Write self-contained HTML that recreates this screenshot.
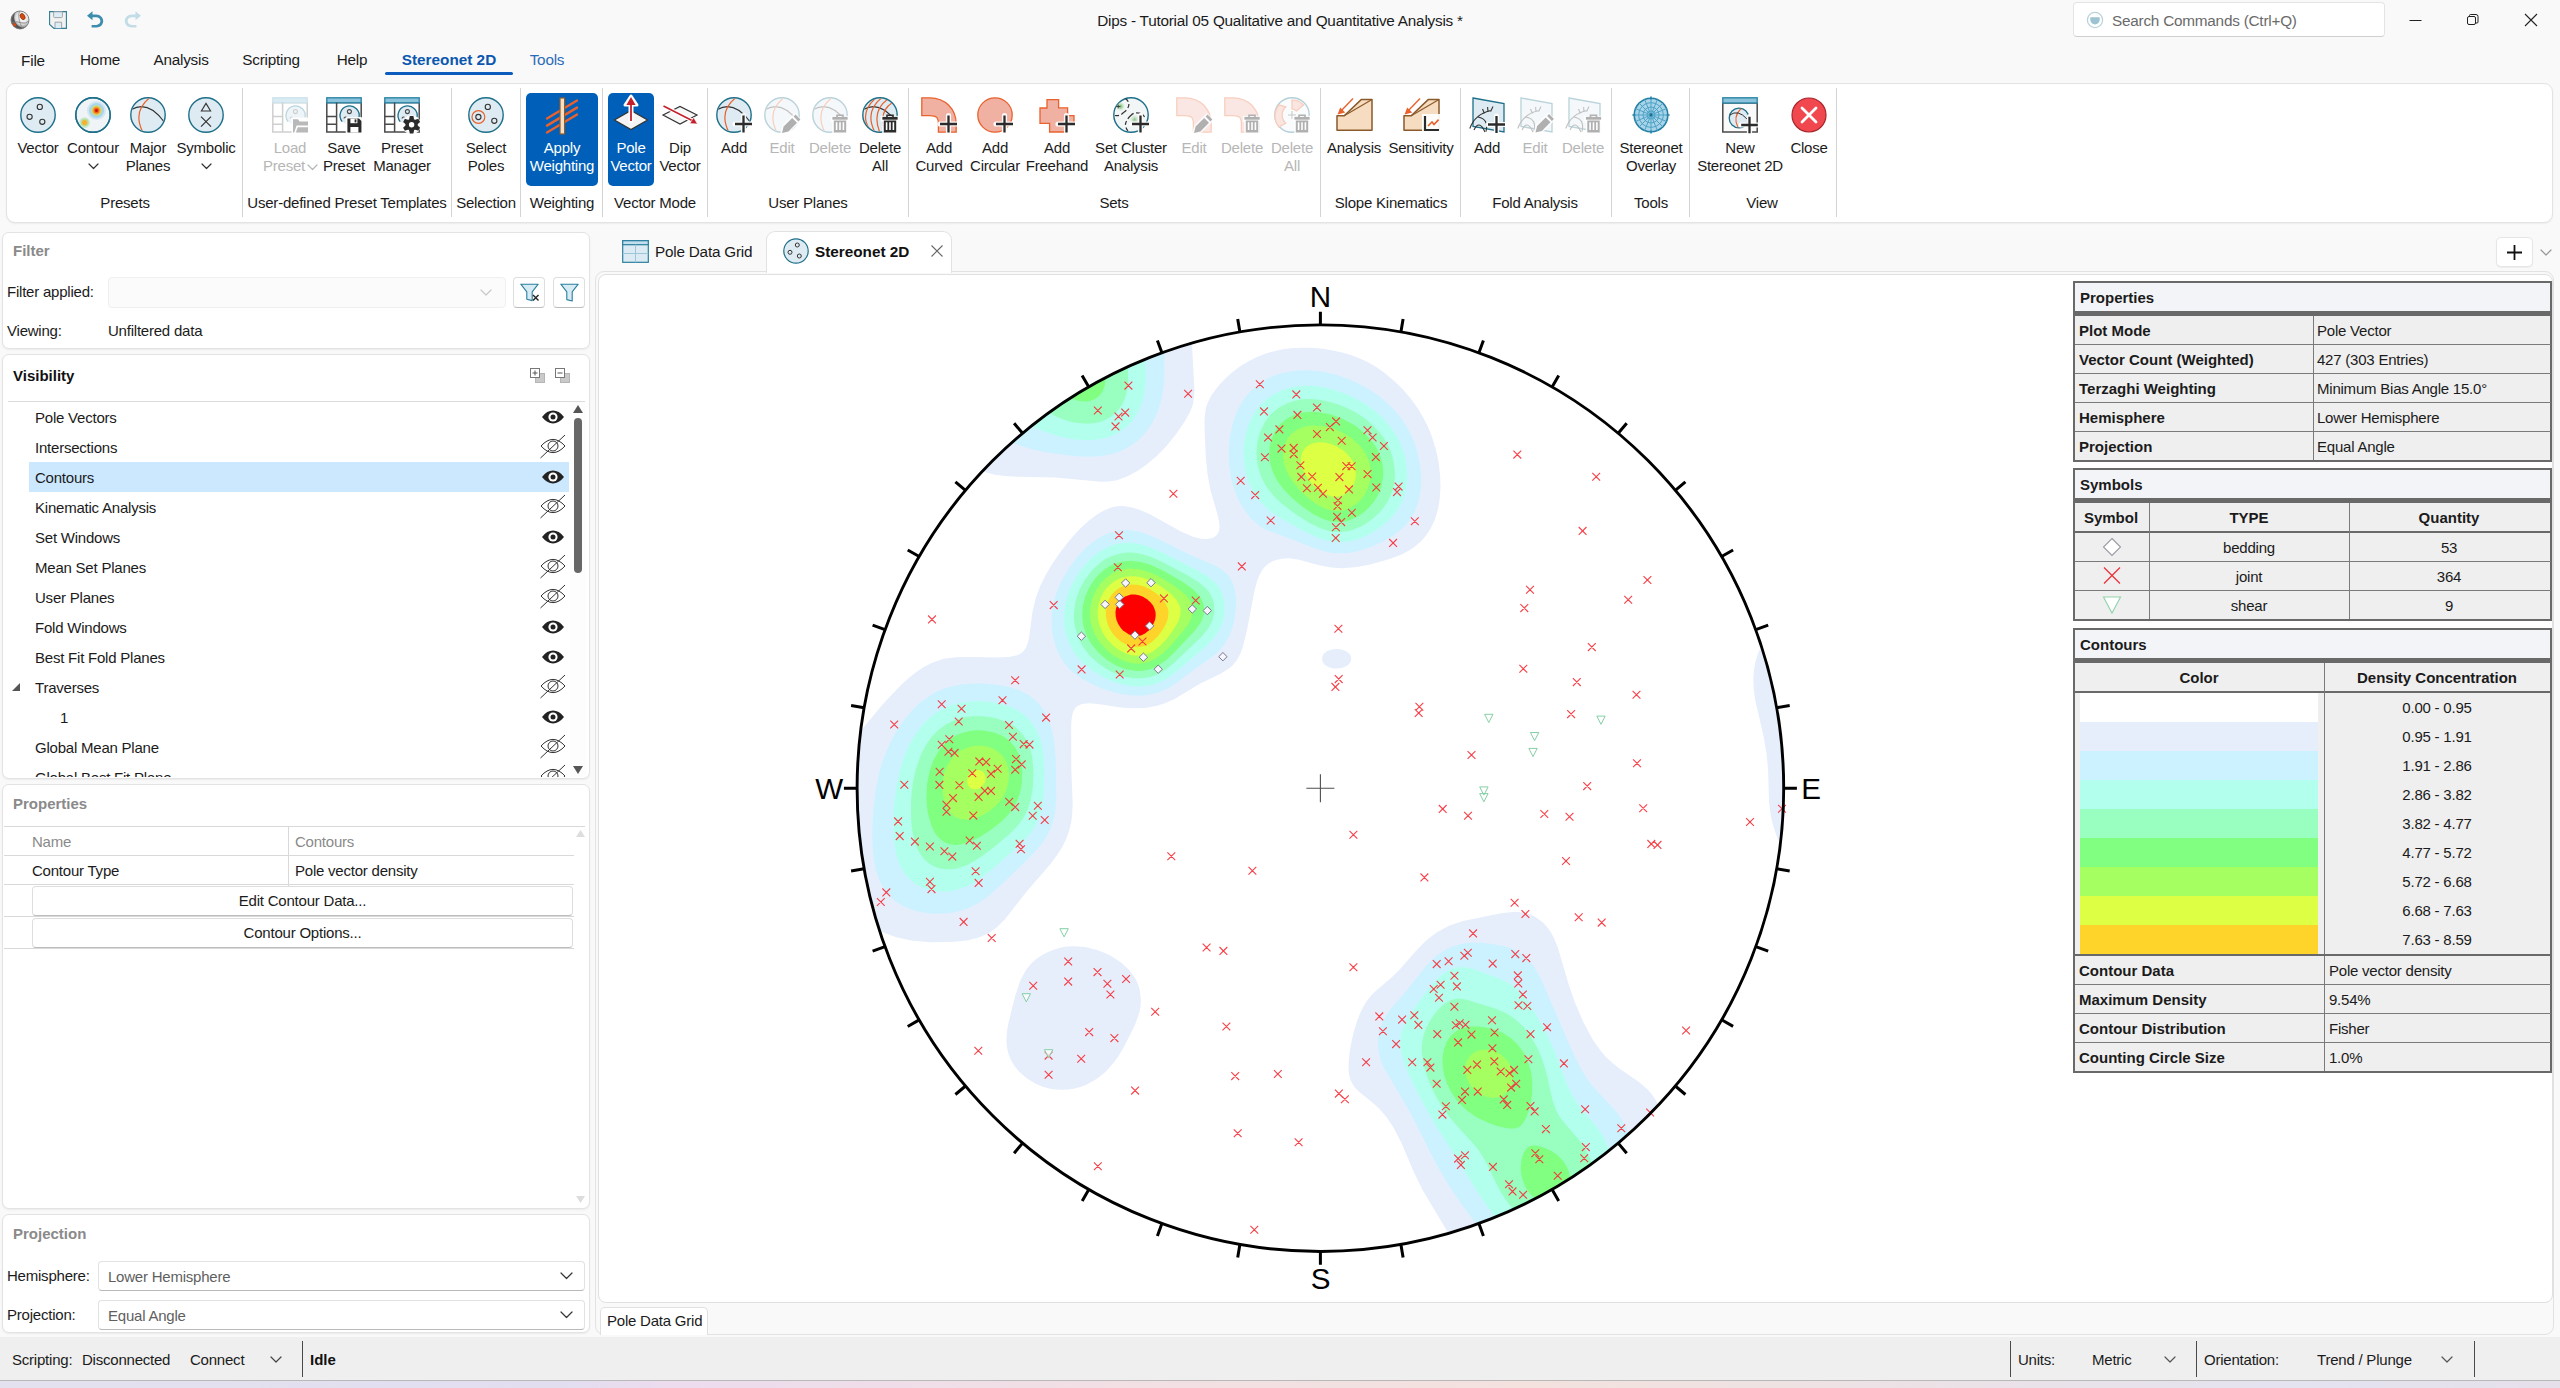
<!DOCTYPE html>
<html lang="en"><head><meta charset="utf-8"><title>Dips - Tutorial 05 Qualitative and Quantitative Analysis</title>
<style>
*{box-sizing:border-box;margin:0;padding:0}
html,body{width:2560px;height:1388px;overflow:hidden}
body{position:relative;background:#f9f9f9;font-family:"Liberation Sans",sans-serif;font-size:15px;color:#1b1b1b;line-height:18px;letter-spacing:-.22px}
.a{position:absolute}
.t{position:absolute;white-space:nowrap;line-height:18px;margin-top:1px}
.c{transform:translateX(-50%);text-align:center}
.b{font-weight:bold;letter-spacing:0}
.g{color:#8a8a8a}
.dis{color:#b4b4b4}
svg{position:absolute;overflow:visible}
.panel{position:absolute;background:#fff;border:1px solid #e3e3e3;border-radius:7px;box-shadow:0 1px 2px rgba(0,0,0,.06)}
.sep{position:absolute;width:1px;background:#d4d4d4;top:88px;height:129px}
.rl{position:absolute;white-space:nowrap;transform:translateX(-50%);text-align:center;line-height:18px;top:139px;margin-top:.4px}
.gl{position:absolute;white-space:nowrap;transform:translateX(-50%);top:194px;line-height:18px;margin-top:.4px}
.sel{position:absolute;background:#005fb8;border-radius:5px}
.combo{position:absolute;background:#fff;border:1px solid #e2e2e2;border-bottom-color:#b9b9b9;border-radius:4px}
.btn{position:absolute;background:#fff;border:1px solid #dedede;border-bottom-color:#bdbdbd;border-radius:4px;text-align:center}
.row{position:absolute;left:35px;white-space:nowrap;line-height:18px}
.lg{position:absolute;background:#efefef;border:2px solid #696969}
.lgh{position:absolute;background:#f3f4f7;border:2px solid #696969;border-bottom-width:4px}
.lc{position:absolute;border-right:1px solid #7a7a7a;border-bottom:1px solid #7a7a7a}
.lt{position:absolute;white-space:nowrap;line-height:18px;margin-top:1px;font-size:15px;color:#1b1b1b}
</style></head><body>
<svg class="a" style="left:10px;top:10px" width="20" height="20" viewBox="0 0 20 20">
<defs><radialGradient id="gA" cx="62%" cy="38%" r="70%"><stop offset="0" stop-color="#fff"/><stop offset=".5" stop-color="#e2e2e2"/><stop offset=".78" stop-color="#8a8a8a"/><stop offset="1" stop-color="#3c3c3c"/></radialGradient></defs>
<circle cx="10" cy="10" r="9" fill="url(#gA)" stroke="#6b6b6b" stroke-width=".8"/><path d="M5.2 2.6A9 9 0 0 0 14.5 17.8A10.5 10.5 0 0 1 5.2 2.6Z" fill="#4a4a4a" opacity=".85"/>
<path d="M1.5 12.5 Q8 11 12 13 Q16 14 18.5 11" fill="none" stroke="#777" stroke-width=".8"/>
<path d="M9.5 1.2 Q7 8 12.5 18.5" fill="none" stroke="#888" stroke-width=".8"/>
<ellipse cx="12.6" cy="6.6" rx="2.2" ry="3.3" transform="rotate(-28 12.6 6.6)" fill="#d9480f" stroke="#7a2a08" stroke-width=".6"/>
<ellipse cx="4.6" cy="14.6" rx="1.8" ry="1.3" transform="rotate(35 4.6 14.6)" fill="#d9480f"/>
</svg>
<svg class="a" style="left:49px;top:11px" width="18" height="18" viewBox="0 0 18 18">
<path d="M.6 .6H17.4V17.4H5L.6 13.4Z" fill="#f2f2f2" stroke="#2e7d95" stroke-width="1.1"/>
<path d="M4.6 .8V5.6Q4.6 6.6 5.6 6.6H12.4Q13.4 6.6 13.4 5.6V.8Z" fill="#dcedf7" stroke="#9c9c9c" stroke-width=".9"/>
<path d="M6 17.2V11.2H12.6V17.2" fill="#dcedf7" stroke="#9c9c9c" stroke-width=".9"/>
</svg>
<svg class="a" style="left:86px;top:10px" width="20" height="20" viewBox="0 0 20 20">
<path d="M6.5 1.2L1 5.7L6.5 10.2V7.2H10.2C12.6 7.2 14.4 8.9 14.4 11.1C14.4 13.3 12.6 15 10.2 15H5.6V17.6H10.4C14.2 17.6 17.2 14.8 17.2 11.1C17.2 7.4 14.2 4.4 10.4 4.4H6.5Z" fill="#3d8dad"/>
</svg>
<svg class="a" style="left:121.5px;top:9.5px" width="20" height="20" viewBox="0 0 20 20">
<path d="M13.5 1.2L19 5.7L13.5 10.2V7.2H9.8C7.4 7.2 5.6 8.9 5.6 11.1C5.6 13.3 7.4 15 9.8 15H14.4V17.6H9.6C5.8 17.6 2.8 14.8 2.8 11.1C2.8 7.4 5.8 4.4 9.6 4.4H13.5Z" fill="#c3dde7"/>
</svg>
<div class="t c" style="left:1280px;top:11px;font-size:15.3px">Dips - Tutorial 05 Qualitative and Quantitative Analysis *</div>
<div class="a" style="left:2073px;top:2px;width:312px;height:35px;background:#fff;border:1px solid #e4e4e4;border-bottom-color:#cfcfcf;border-radius:4px"></div>
<svg class="a" style="left:2086px;top:11px" width="18" height="18" viewBox="0 0 18 18">
<circle cx="9" cy="9" r="7.6" fill="#fff" stroke="#b9d3dd" stroke-width="1.3"/>
<path d="M4.3 6.2H13.7V8.6C13.7 11.4 11.6 13.4 9 13.4C6.4 13.4 4.3 11.4 4.3 8.6Z" fill="#9cc3d1"/>
</svg>
<div class="t" style="left:2112px;top:11px;font-size:15.3px;color:#6a6a6a">Search Commands (Ctrl+Q)</div>
<svg class="a" style="left:2400px;top:0" width="160" height="40" viewBox="0 0 160 40">
<path d="M9.5 20.5H21.5" stroke="#222" stroke-width="1"/>
<rect x="67.5" y="16.5" width="8" height="8" rx="1.5" fill="none" stroke="#222" stroke-width="1"/>
<path d="M69.5 16.5V15.5Q69.5 14.5 70.5 14.5H76Q78 14.5 78 16.5V22Q78 23 77 23H75.5" fill="none" stroke="#222" stroke-width="1"/>
<path d="M125 14L137 26M137 14L125 26" stroke="#222" stroke-width="1.1"/>
</svg>
<div class="t c" style="left:33px;top:51px;font-size:15.3px">File</div>
<div class="t c" style="left:100px;top:50px;font-size:15.3px">Home</div>
<div class="t c" style="left:181px;top:50px;font-size:15.3px">Analysis</div>
<div class="t c" style="left:271px;top:50px;font-size:15.3px">Scripting</div>
<div class="t c" style="left:352px;top:50px;font-size:15.3px">Help</div>
<div class="t c b" style="left:449px;top:50px;font-size:15.3px;color:#0b57b0">Stereonet 2D</div>
<div class="t c" style="left:547px;top:50px;font-size:15.3px;color:#2b6cb8">Tools</div>
<div class="a" style="left:385px;top:72px;width:128px;height:3px;border-radius:2px;background:#0b5cbd"></div>
<div class="panel" style="left:6px;top:83px;width:2547px;height:140px;border-radius:9px"></div>
<div class="sel" style="left:526px;top:93px;width:72px;height:93px"></div>
<div class="sel" style="left:608px;top:93px;width:46px;height:93px"></div>
<svg class="a" style="left:20px;top:97px" width="36" height="36" viewBox="0 0 36 36"><circle cx="18" cy="18" r="17.2" fill="#deebf2" stroke="#1d6f8a" stroke-width="1.4" opacity="1"/><circle cx="19.8" cy="9.9" r="2.6" fill="none" stroke="#333" stroke-width="1.1"/><circle cx="9.6" cy="19.8" r="2.6" fill="none" stroke="#333" stroke-width="1.1"/><circle cx="22.3" cy="24.8" r="2.6" fill="none" stroke="#333" stroke-width="1.1"/></svg>
<div class="rl" style="left:38px;">Vector</div>
<svg class="a" style="left:75px;top:97px" width="36" height="36" viewBox="0 0 36 36"><defs><clipPath id="cc"><circle cx="18" cy="18" r="16.6"/></clipPath></defs><circle cx="18" cy="18" r="17.2" fill="#f1f4f6" stroke="#1d6f8a" stroke-width="1.4" opacity="1"/><g clip-path="url(#cc)"><circle cx="21.5" cy="13.5" r="9.6" fill="#d3e6f4"/><circle cx="21.5" cy="13.5" r="7.6" fill="#a9d4ec"/><circle cx="21.5" cy="13.5" r="5.8" fill="#b7e0a8"/><circle cx="21.5" cy="13.5" r="4.3" fill="#f7b731"/><circle cx="21.5" cy="13.5" r="2.9" fill="#ef6a1f"/><circle cx="21.5" cy="13.5" r="1.5" fill="#c81414"/><circle cx="9.6" cy="25.6" r="5.4" fill="#cfe8d2"/><circle cx="9.6" cy="25.6" r="4" fill="#b5e0a0"/><circle cx="9.6" cy="25.6" r="2.6" fill="#f9b12d"/></g><circle cx="18" cy="18" r="17.2" fill="none" stroke="#1d6f8a" stroke-width="1.4"/></svg>
<div class="rl" style="left:93px;">Contour</div>
<svg class="a" style="left:130px;top:97px" width="36" height="36" viewBox="0 0 36 36"><g opacity="1"><circle cx="18" cy="18" r="17.2" fill="#deebf2" stroke="#1d6f8a" stroke-width="1.4" opacity="1"/><defs><clipPath id="cp2"><circle cx="18" cy="18" r="16.5"/></clipPath></defs><g clip-path="url(#cp2)"><path d="M1.5 12.5Q18 3 33.8 24.5" fill="none" stroke="#333" stroke-width="1.1"/><path d="M20 .5Q2.5 14 12.5 34.5" fill="none" stroke="#e9622d" stroke-width="1.2"/></g></g></svg>
<div class="rl" style="left:148px;">Major<br>Planes</div>
<svg class="a" style="left:188px;top:97px" width="36" height="36" viewBox="0 0 36 36"><circle cx="18" cy="18" r="17.2" fill="#deebf2" stroke="#1d6f8a" stroke-width="1.4" opacity="1"/><path d="M18 6.4L22.6 14H13.4Z" fill="none" stroke="#333" stroke-width="1.1"/><path d="M13 19.6L23 29.6M23 19.6L13 29.6" stroke="#333" stroke-width="1.2"/></svg>
<div class="rl" style="left:206px;">Symbolic</div>
<svg class="a" style="left:272px;top:97px" width="36" height="36" viewBox="0 0 36 36"><rect x=".8" y="5.6" width="34.4" height="29.4" fill="#fff" stroke="#cfcfcf" stroke-width="1.5"/><rect x=".8" y=".8" width="34.4" height="5" fill="#d9ebf3" stroke="#cfe3ec" stroke-width="1.4"/><path d="M10.6 5.6V35M.8 19.6H10.6M.8 27.2H10.6" stroke="#cfcfcf" stroke-width="1.5" fill="none"/><circle cx="23.6" cy="18.4" r="9.4" fill="#eef5f8"/><path d="M16.2 24.6A9.6 9.6 0 1 1 33 20.6" fill="none" stroke="#bcd6df" stroke-width="1.3"/><circle cx="23.4" cy="14.6" r="2" fill="none" stroke="#cfcfcf" stroke-width="1.1"/><path d="M18 21.5a1.6 1.6 0 0 1 2.4 -1.2" fill="none" stroke="#cfcfcf" stroke-width="1.1"/><path d="M19.5 20.5H36.5V36.5H19.5Z" fill="#fff" opacity=".9"/><path d="M21 22.2H26L27.6 24.4H36V28.6H24.6L22.2 35.6H21Z" fill="#b9b9b9"/><path d="M25.8 30.2H36V35.6H23.8Z" fill="#b9b9b9"/></svg>
<div class="rl" style="left:290px;color:#b6b6b6">Load<br><span style="margin-right:12px">Preset</span></div>
<svg class="a" style="left:326px;top:97px" width="36" height="36" viewBox="0 0 36 36"><rect x=".8" y="5.6" width="34.4" height="29.4" fill="#fff" stroke="#4a4a4a" stroke-width="1.5"/><rect x=".8" y=".8" width="34.4" height="5" fill="#8cc3dc" stroke="#2e86a6" stroke-width="1.4"/><path d="M10.6 5.6V35M.8 19.6H10.6M.8 27.2H10.6" stroke="#4a4a4a" stroke-width="1.5" fill="none"/><circle cx="23.6" cy="18.4" r="9.4" fill="#deebf2"/><path d="M16.2 24.6A9.6 9.6 0 1 1 33 20.6" fill="none" stroke="#1d6f8a" stroke-width="1.3"/><circle cx="23.4" cy="14.6" r="2" fill="none" stroke="#4a4a4a" stroke-width="1.1"/><path d="M18 21.5a1.6 1.6 0 0 1 2.4 -1.2" fill="none" stroke="#4a4a4a" stroke-width="1.1"/><rect x="19.6" y="20" width="17" height="17" rx="2" fill="#fff" opacity=".95"/><path d="M21.4 21.6H33L35.4 24V35.6H21.4Z" fill="#2b2b2b"/><rect x="24.4" y="21.6" width="7" height="4.6" fill="#fff"/><rect x="28.6" y="22.4" width="1.8" height="3" fill="#2b2b2b"/><rect x="24.4" y="30" width="8" height="5.6" fill="#fff"/></svg>
<div class="rl" style="left:344px;">Save<br>Preset</div>
<svg class="a" style="left:384px;top:97px" width="36" height="36" viewBox="0 0 36 36"><rect x=".8" y="5.6" width="34.4" height="29.4" fill="#fff" stroke="#4a4a4a" stroke-width="1.5"/><rect x=".8" y=".8" width="34.4" height="5" fill="#8cc3dc" stroke="#2e86a6" stroke-width="1.4"/><path d="M10.6 5.6V35M.8 19.6H10.6M.8 27.2H10.6" stroke="#4a4a4a" stroke-width="1.5" fill="none"/><circle cx="23.6" cy="18.4" r="9.4" fill="#deebf2"/><path d="M16.2 24.6A9.6 9.6 0 1 1 33 20.6" fill="none" stroke="#1d6f8a" stroke-width="1.3"/><circle cx="23.4" cy="14.6" r="2" fill="none" stroke="#4a4a4a" stroke-width="1.1"/><path d="M18 21.5a1.6 1.6 0 0 1 2.4 -1.2" fill="none" stroke="#4a4a4a" stroke-width="1.1"/><circle cx="27.6" cy="27.8" r="9.6" fill="#fff" opacity=".95"/><path d="M25.0 22.8L25.8 19.0H29.400000000000002L30.200000000000003 22.8Z" fill="#2b2b2b" transform="rotate(0 27.6 27.8)"/><path d="M25.0 22.8L25.8 19.0H29.400000000000002L30.200000000000003 22.8Z" fill="#2b2b2b" transform="rotate(60 27.6 27.8)"/><path d="M25.0 22.8L25.8 19.0H29.400000000000002L30.200000000000003 22.8Z" fill="#2b2b2b" transform="rotate(120 27.6 27.8)"/><path d="M25.0 22.8L25.8 19.0H29.400000000000002L30.200000000000003 22.8Z" fill="#2b2b2b" transform="rotate(180 27.6 27.8)"/><path d="M25.0 22.8L25.8 19.0H29.400000000000002L30.200000000000003 22.8Z" fill="#2b2b2b" transform="rotate(240 27.6 27.8)"/><path d="M25.0 22.8L25.8 19.0H29.400000000000002L30.200000000000003 22.8Z" fill="#2b2b2b" transform="rotate(300 27.6 27.8)"/><circle cx="27.6" cy="27.8" r="6.1" fill="#2b2b2b"/><circle cx="27.6" cy="27.8" r="2.7" fill="#fff"/></svg>
<div class="rl" style="left:402px;">Preset<br>Manager</div>
<svg class="a" style="left:468px;top:97px" width="36" height="36" viewBox="0 0 36 36"><circle cx="18" cy="18" r="17.2" fill="#deebf2" stroke="#1d6f8a" stroke-width="1.4" opacity="1"/><circle cx="10.4" cy="20" r="6.4" fill="none" stroke="#e9622d" stroke-width="1.2"/><circle cx="19.8" cy="9.9" r="2.6" fill="none" stroke="#333" stroke-width="1.1"/><circle cx="10.4" cy="20" r="2.6" fill="none" stroke="#333" stroke-width="1.1"/><circle cx="26.3" cy="23.8" r="2.6" fill="none" stroke="#333" stroke-width="1.1"/></svg>
<div class="rl" style="left:486px;">Select<br>Poles</div>
<svg class="a" style="left:544px;top:97px" width="36" height="36" viewBox="0 0 36 36"><path d="M3 21.5L33 3.5M3 28.6L33 10.6M3 35.5L33 17.5" stroke="#e9622d" stroke-width="2.4" stroke-linecap="round"/><rect x="16" y="1" width="4.6" height="36" fill="#f8dfc0" stroke="#8b5a2b" stroke-width="1.2"/></svg>
<div class="rl" style="left:562px;color:#fff">Apply<br>Weighting</div>
<svg class="a" style="left:613px;top:97px" width="36" height="36" viewBox="0 0 36 36"><path d="M18 13.4L34.6 23L18 32.6L1.4 23Z" fill="#f4f4f4" stroke="#333" stroke-width="1.2"/><path d="M18 24V4" stroke="#fff" stroke-width="5" stroke-linecap="round"/><path d="M18 -1L24 8H12Z" fill="#fff" stroke="#fff" stroke-width="3" stroke-linejoin="round"/><path d="M18 24V7" stroke="#c41f2c" stroke-width="1.8"/><path d="M18 0L22.6 8H13.4Z" fill="#c41f2c"/></svg>
<div class="rl" style="left:631px;color:#fff">Pole<br>Vector</div>
<svg class="a" style="left:662px;top:97px" width="36" height="36" viewBox="0 0 36 36"><path d="M1 18L18 9.5L35 18L18 27Z" fill="#f7f7f7" stroke="#333" stroke-width="1.2"/><path d="M1.5 9L31 24" stroke="#fff" stroke-width="4"/><path d="M1.5 9L31 24" stroke="#c41f2c" stroke-width="1.5"/><path d="M35.5 27L27.8 26.6L31.6 20.4Z" fill="#c41f2c" stroke="#fff" stroke-width=".6"/></svg>
<div class="rl" style="left:680px;">Dip<br>Vector</div>
<svg class="a" style="left:716px;top:97px" width="36" height="36" viewBox="0 0 36 36"><g opacity="1"><circle cx="18" cy="18" r="17.2" fill="#deebf2" stroke="#1d6f8a" stroke-width="1.4" opacity="1"/><defs><clipPath id="cp2"><circle cx="18" cy="18" r="16.5"/></clipPath></defs><g clip-path="url(#cp2)"><path d="M1.5 12.5Q18 3 33.8 24.5" fill="none" stroke="#333" stroke-width="1.1"/><path d="M20 .5Q2.5 14 12.5 34.5" fill="none" stroke="#e9622d" stroke-width="1.2"/></g></g><path d="M19.0 27H36.0M27.5 18.5V35.5" stroke="#fff" stroke-width="5.2" stroke-linecap="round" opacity=".92"/><path d="M19.0 27H36.0M27.5 18.5V35.5" stroke="#2b2b2b" stroke-width="2.3"/></svg>
<div class="rl" style="left:734px;">Add</div>
<svg class="a" style="left:764px;top:97px" width="36" height="36" viewBox="0 0 36 36"><g opacity="0.3"><circle cx="18" cy="18" r="17.2" fill="#deebf2" stroke="#1d6f8a" stroke-width="1.4" opacity="1"/><defs><clipPath id="cp2"><circle cx="18" cy="18" r="16.5"/></clipPath></defs><g clip-path="url(#cp2)"><path d="M1.5 12.5Q18 3 33.8 24.5" fill="none" stroke="#333" stroke-width="1.1"/><path d="M20 .5Q2.5 14 12.5 34.5" fill="none" stroke="#e9622d" stroke-width="1.2"/></g></g><path d="M18 36L19.6 29.6L31 18.2L35.8 23L24.4 34.4Z" fill="#fff" stroke="#fff" stroke-width="3.2" opacity=".9"/><path d="M18 36L19.6 29.6L28.2 21L33 25.8L24.4 34.4Z" fill="#b0b0b0"/><path d="M29.6 19.6L31.6 17.6L36.4 22.4L34.4 24.4Z" fill="#b0b0b0"/></svg>
<div class="rl" style="left:782px;color:#b6b6b6">Edit</div>
<svg class="a" style="left:812px;top:97px" width="36" height="36" viewBox="0 0 36 36"><g opacity="0.3"><circle cx="18" cy="18" r="17.2" fill="#deebf2" stroke="#1d6f8a" stroke-width="1.4" opacity="1"/><defs><clipPath id="cp2"><circle cx="18" cy="18" r="16.5"/></clipPath></defs><g clip-path="url(#cp2)"><path d="M1.5 12.5Q18 3 33.8 24.5" fill="none" stroke="#333" stroke-width="1.1"/><path d="M20 .5Q2.5 14 12.5 34.5" fill="none" stroke="#e9622d" stroke-width="1.2"/></g></g><path d="M20.2 20.3H35.8V23.3H20.2Z" fill="#fff" stroke="#fff" stroke-width="3" opacity=".9"/><path d="M21.7 23.0H34.3V35.7H21.7Z" fill="#fff" stroke="#fff" stroke-width="3" opacity=".9"/><path d="M25 20.1V18.3H31V20.1" fill="none" stroke="#b0b0b0" stroke-width="1.6"/><rect x="20.4" y="19.9" width="15.2" height="2.8" fill="#b0b0b0"/><path d="M21.8 23.5H34.2V35.5H21.8Z" fill="#b0b0b0"/><path d="M24.6 25.3V33.1M28 25.3V33.1M31.4 25.3V33.1" stroke="#fff" stroke-width="1.6"/></svg>
<div class="rl" style="left:830px;color:#b6b6b6">Delete</div>
<svg class="a" style="left:862px;top:97px" width="36" height="36" viewBox="0 0 36 36"><g opacity="1"><circle cx="18" cy="18" r="17.2" fill="#deebf2" stroke="#1d6f8a" stroke-width="1.4" opacity="1"/><defs><clipPath id="cp2"><circle cx="18" cy="18" r="16.5"/></clipPath></defs><g clip-path="url(#cp2)"><path d="M1.5 12.5Q18 3 33.8 24.5" fill="none" stroke="#333" stroke-width="1.1"/><path d="M20 .5Q2.5 14 12.5 34.5" fill="none" stroke="#e9622d" stroke-width="1.2"/><path d="M26 2Q9 14 18 36" fill="none" stroke="#e9622d" stroke-width="1.2"/><path d="M30.5 5.5Q15.5 15 23.5 36" fill="none" stroke="#e9622d" stroke-width="1.2"/><path d="M14 .8Q-3 16 7.5 32" fill="none" stroke="#e9622d" stroke-width="1.2"/></g></g><path d="M20.2 20.3H35.8V23.3H20.2Z" fill="#fff" stroke="#fff" stroke-width="3" opacity=".9"/><path d="M21.7 23.0H34.3V35.7H21.7Z" fill="#fff" stroke="#fff" stroke-width="3" opacity=".9"/><path d="M25 20.1V18.3H31V20.1" fill="none" stroke="#2b2b2b" stroke-width="1.6"/><rect x="20.4" y="19.9" width="15.2" height="2.8" fill="#2b2b2b"/><path d="M21.8 23.5H34.2V35.5H21.8Z" fill="#2b2b2b"/><path d="M24.6 25.3V33.1M28 25.3V33.1M31.4 25.3V33.1" stroke="#fff" stroke-width="1.6"/></svg>
<div class="rl" style="left:880px;">Delete<br>All</div>
<svg class="a" style="left:921px;top:97px" width="36" height="36" viewBox="0 0 36 36"><g opacity="1"><path d="M.8 .8H9C24 .8 35.2 12 35.2 27V35.2H17.4V27C17.4 20.5 15.5 18.6 9 18.6H.8Z" fill="#f0b0a2" stroke="#e9622d" stroke-width="1.3"/></g><path d="M19.0 27H36.0M27.5 18.5V35.5" stroke="#fff" stroke-width="5.2" stroke-linecap="round" opacity=".92"/><path d="M19.0 27H36.0M27.5 18.5V35.5" stroke="#2b2b2b" stroke-width="2.3"/></svg>
<div class="rl" style="left:939px;">Add<br>Curved</div>
<svg class="a" style="left:977px;top:97px" width="36" height="36" viewBox="0 0 36 36"><circle cx="18" cy="18" r="17.2" fill="#f0b0a2" stroke="#e9622d" stroke-width="1.3"/><path d="M19.0 27H36.0M27.5 18.5V35.5" stroke="#fff" stroke-width="5.2" stroke-linecap="round" opacity=".92"/><path d="M19.0 27H36.0M27.5 18.5V35.5" stroke="#2b2b2b" stroke-width="2.3"/></svg>
<div class="rl" style="left:995px;">Add<br>Circular</div>
<svg class="a" style="left:1039px;top:97px" width="36" height="36" viewBox="0 0 36 36"><path d="M8 2.6H19.6V10.8H28.6V18.6H35V26H28V35H10.6V26.4H1V11H8Z" fill="#f0b0a2" stroke="#e9622d" stroke-width="1.3"/><path d="M19.0 27H36.0M27.5 18.5V35.5" stroke="#fff" stroke-width="5.2" stroke-linecap="round" opacity=".92"/><path d="M19.0 27H36.0M27.5 18.5V35.5" stroke="#2b2b2b" stroke-width="2.3"/></svg>
<div class="rl" style="left:1057px;">Add<br>Freehand</div>
<svg class="a" style="left:1113px;top:97px" width="36" height="36" viewBox="0 0 36 36"><defs><radialGradient id="gC"><stop offset="0" stop-color="#5cae52"/><stop offset="1" stop-color="#cfe9cf" stop-opacity="0"/></radialGradient></defs><circle cx="18" cy="18" r="17.2" fill="#f3f6f7" stroke="#1d6f8a" stroke-width="1.4" opacity="1"/><circle cx="7.4" cy="9.4" r="5" fill="url(#gC)"/><circle cx="21.6" cy="22.6" r="5.5" fill="url(#gC)" opacity=".7"/><path d="M12.5 1.6Q17 5 15.5 9.5Q14 13.5 10.5 15.5M2 18.5Q7 19.5 10.5 15.5M17.5 18.8Q20 15.5 24.5 15.8Q29.5 16 31.5 20M17.5 18.8Q13.5 22.5 12.5 27Q12.5 31 15 34" fill="none" stroke="#333" stroke-width="1.2" stroke-dasharray="4 2.6"/><path d="M5.2 7.6V11.4M3.3 9.5H7.1" stroke="#333" stroke-width=".9"/><path d="M19.0 27H36.0M27.5 18.5V35.5" stroke="#fff" stroke-width="5.2" stroke-linecap="round" opacity=".92"/><path d="M19.0 27H36.0M27.5 18.5V35.5" stroke="#2b2b2b" stroke-width="2.3"/></svg>
<div class="rl" style="left:1131px;">Set Cluster<br>Analysis</div>
<svg class="a" style="left:1176px;top:97px" width="36" height="36" viewBox="0 0 36 36"><g opacity="0.3"><path d="M.8 .8H9C24 .8 35.2 12 35.2 27V35.2H17.4V27C17.4 20.5 15.5 18.6 9 18.6H.8Z" fill="#f0b0a2" stroke="#e9622d" stroke-width="1.3"/></g><path d="M18 36L19.6 29.6L31 18.2L35.8 23L24.4 34.4Z" fill="#fff" stroke="#fff" stroke-width="3.2" opacity=".9"/><path d="M18 36L19.6 29.6L28.2 21L33 25.8L24.4 34.4Z" fill="#b0b0b0"/><path d="M29.6 19.6L31.6 17.6L36.4 22.4L34.4 24.4Z" fill="#b0b0b0"/></svg>
<div class="rl" style="left:1194px;color:#b6b6b6">Edit</div>
<svg class="a" style="left:1224px;top:97px" width="36" height="36" viewBox="0 0 36 36"><g opacity="0.3"><path d="M.8 .8H9C24 .8 35.2 12 35.2 27V35.2H17.4V27C17.4 20.5 15.5 18.6 9 18.6H.8Z" fill="#f0b0a2" stroke="#e9622d" stroke-width="1.3"/></g><path d="M20.2 20.3H35.8V23.3H20.2Z" fill="#fff" stroke="#fff" stroke-width="3" opacity=".9"/><path d="M21.7 23.0H34.3V35.7H21.7Z" fill="#fff" stroke="#fff" stroke-width="3" opacity=".9"/><path d="M25 20.1V18.3H31V20.1" fill="none" stroke="#b0b0b0" stroke-width="1.6"/><rect x="20.4" y="19.9" width="15.2" height="2.8" fill="#b0b0b0"/><path d="M21.8 23.5H34.2V35.5H21.8Z" fill="#b0b0b0"/><path d="M24.6 25.3V33.1M28 25.3V33.1M31.4 25.3V33.1" stroke="#fff" stroke-width="1.6"/></svg>
<div class="rl" style="left:1242px;color:#b6b6b6">Delete</div>
<svg class="a" style="left:1274px;top:97px" width="36" height="36" viewBox="0 0 36 36"><g opacity=".32"><circle cx="18" cy="18" r="17.2" fill="#eef4f7" stroke="#1d6f8a" stroke-width="1.4" opacity="1"/><path d="M18 3A15 15 0 0 1 29.5 8L22.5 14A6 6 0 0 0 18 12Z" fill="#f0b0a2" stroke="#e9622d" stroke-width="1.2"/><path d="M11.8 9.8A11 11 0 0 0 11.8 26.2L5 30A17 17 0 0 1 5 8Z" fill="#f0b0a2" stroke="#e9622d" stroke-width="1.2"/><path d="M18 14V22M14 18H22" stroke="#555" stroke-width="1"/></g><path d="M20.2 20.3H35.8V23.3H20.2Z" fill="#fff" stroke="#fff" stroke-width="3" opacity=".9"/><path d="M21.7 23.0H34.3V35.7H21.7Z" fill="#fff" stroke="#fff" stroke-width="3" opacity=".9"/><path d="M25 20.1V18.3H31V20.1" fill="none" stroke="#b0b0b0" stroke-width="1.6"/><rect x="20.4" y="19.9" width="15.2" height="2.8" fill="#b0b0b0"/><path d="M21.8 23.5H34.2V35.5H21.8Z" fill="#b0b0b0"/><path d="M24.6 25.3V33.1M28 25.3V33.1M31.4 25.3V33.1" stroke="#fff" stroke-width="1.6"/></svg>
<div class="rl" style="left:1292px;color:#b6b6b6">Delete<br>All</div>
<svg class="a" style="left:1336px;top:97px" width="36" height="36" viewBox="0 0 36 36"><g transform="translate(0,-2)"><path d="M4 17L17 3.5" stroke="#e9622d" stroke-width="1.4"/><path d="M1.6 19.5L4.2 12.6L9.2 17.4Z" fill="#e9622d"/><path d="M1 35.2V20.8H8.2L25.2 4.6H36V35.2Z" fill="#f6dcc0" stroke="#8b5a2b" stroke-width="1.5" stroke-linejoin="round"/><path d="M8.2 20.8L36 4.6" stroke="#8b5a2b" stroke-width="1.2" fill="none"/></g></svg>
<div class="rl" style="left:1354px;">Analysis</div>
<svg class="a" style="left:1403px;top:97px" width="36" height="36" viewBox="0 0 36 36"><g transform="translate(0,-2)"><path d="M4 17L17 3.5" stroke="#e9622d" stroke-width="1.4"/><path d="M1.6 19.5L4.2 12.6L9.2 17.4Z" fill="#e9622d"/><path d="M1 35.2V20.8H8.2L25.2 4.6H36V35.2Z" fill="#f6dcc0" stroke="#8b5a2b" stroke-width="1.5" stroke-linejoin="round"/><path d="M8.2 20.8L36 4.6" stroke="#8b5a2b" stroke-width="1.2" fill="none"/><rect x="19" y="19" width="18" height="18" fill="#fff" opacity=".92"/><path d="M22 21V35H36" fill="none" stroke="#2b2b2b" stroke-width="2.2"/><path d="M25 31L29 27L31 29.6L35.6 24.6" fill="none" stroke="#e9622d" stroke-width="1.6"/></g></svg>
<div class="rl" style="left:1421px;">Sensitivity</div>
<svg class="a" style="left:1469px;top:97px" width="36" height="36" viewBox="0 0 36 36"><g opacity="1"><path d="M4 1L35 6.5V35L4 29.5Z" fill="#deebf2" stroke="#1d6f8a" stroke-width="1.3"/><path d="M.8 31.5Q6 17 22 13.5M5 33Q10 22 16 35M9 20Q20 22 17 34.5M13.5 12L15.5 16.5M18.6 10L19 15M24 9.4L21.6 14.4" fill="none" stroke="#333" stroke-width="1.1"/></g><path d="M19.0 27.5H36.0M27.5 19.0V36.0" stroke="#fff" stroke-width="5.2" stroke-linecap="round" opacity=".92"/><path d="M19.0 27.5H36.0M27.5 19.0V36.0" stroke="#2b2b2b" stroke-width="2.3"/></svg>
<div class="rl" style="left:1487px;">Add</div>
<svg class="a" style="left:1517px;top:97px" width="36" height="36" viewBox="0 0 36 36"><g opacity="0.3"><path d="M4 1L35 6.5V35L4 29.5Z" fill="#deebf2" stroke="#1d6f8a" stroke-width="1.3"/><path d="M.8 31.5Q6 17 22 13.5M5 33Q10 22 16 35M9 20Q20 22 17 34.5M13.5 12L15.5 16.5M18.6 10L19 15M24 9.4L21.6 14.4" fill="none" stroke="#333" stroke-width="1.1"/></g><path d="M18.5 35.5L20.1 29.1L31.5 17.7L36.3 22.5L24.9 33.9Z" fill="#fff" stroke="#fff" stroke-width="3.2" opacity=".9"/><path d="M18.5 35.5L20.1 29.1L28.7 20.5L33.5 25.3L24.9 33.9Z" fill="#b0b0b0"/><path d="M30.1 19.1L32.1 17.1L36.9 21.9L34.9 23.9Z" fill="#b0b0b0"/></svg>
<div class="rl" style="left:1535px;color:#b6b6b6">Edit</div>
<svg class="a" style="left:1565px;top:97px" width="36" height="36" viewBox="0 0 36 36"><g opacity="0.3"><path d="M4 1L35 6.5V35L4 29.5Z" fill="#deebf2" stroke="#1d6f8a" stroke-width="1.3"/><path d="M.8 31.5Q6 17 22 13.5M5 33Q10 22 16 35M9 20Q20 22 17 34.5M13.5 12L15.5 16.5M18.6 10L19 15M24 9.4L21.6 14.4" fill="none" stroke="#333" stroke-width="1.1"/></g><path d="M20.7 20.3H36.3V23.3H20.7Z" fill="#fff" stroke="#fff" stroke-width="3" opacity=".9"/><path d="M22.2 23.0H34.8V35.7H22.2Z" fill="#fff" stroke="#fff" stroke-width="3" opacity=".9"/><path d="M25.5 20.1V18.3H31.5V20.1" fill="none" stroke="#b0b0b0" stroke-width="1.6"/><rect x="20.9" y="19.9" width="15.2" height="2.8" fill="#b0b0b0"/><path d="M22.3 23.5H34.7V35.5H22.3Z" fill="#b0b0b0"/><path d="M25.1 25.3V33.1M28.5 25.3V33.1M31.9 25.3V33.1" stroke="#fff" stroke-width="1.6"/></svg>
<div class="rl" style="left:1583px;color:#b6b6b6">Delete</div>
<svg class="a" style="left:1633px;top:97px" width="36" height="36" viewBox="0 0 36 36"><circle cx="18" cy="18" r="16.8" fill="#a9d3e8" stroke="#2481a5" stroke-width="1.6"/><circle cx="18" cy="18" r="4" fill="none" stroke="#4ca3c6" stroke-width="1"/><circle cx="18" cy="18" r="8" fill="none" stroke="#4ca3c6" stroke-width="1"/><circle cx="18" cy="18" r="12.4" fill="none" stroke="#4ca3c6" stroke-width="1"/><path d="M1.00 18.00L35.00 18.00" stroke="#4ca3c6" stroke-width="1"/><path d="M2.29 11.49L33.71 24.51" stroke="#4ca3c6" stroke-width="1"/><path d="M5.98 5.98L30.02 30.02" stroke="#4ca3c6" stroke-width="1"/><path d="M11.49 2.29L24.51 33.71" stroke="#4ca3c6" stroke-width="1"/><path d="M18.00 1.00L18.00 35.00" stroke="#4ca3c6" stroke-width="1"/><path d="M24.51 2.29L11.49 33.71" stroke="#4ca3c6" stroke-width="1"/><path d="M30.02 5.98L5.98 30.02" stroke="#4ca3c6" stroke-width="1"/><path d="M33.71 11.49L2.29 24.51" stroke="#4ca3c6" stroke-width="1"/><path d="M18 -.6V2.4M18 33.6V36.6M-.6 18H2.4M33.6 18H36.6" stroke="#2481a5" stroke-width="1.6"/><circle cx="18" cy="18" r="1.4" fill="#1d6f8a"/></svg>
<div class="rl" style="left:1651px;">Stereonet<br>Overlay</div>
<svg class="a" style="left:1722px;top:97px" width="36" height="36" viewBox="0 0 36 36"><rect x=".8" y="6" width="34.4" height="29" fill="#fafafa" stroke="#4a4a4a" stroke-width="1.5"/><rect x=".8" y=".8" width="34.4" height="5.2" fill="#8cc3dc" stroke="#2e86a6" stroke-width="1.4"/><circle cx="17" cy="21" r="9.8" fill="#deebf2" stroke="#1d6f8a" stroke-width="1.3"/><path d="M19 11.5Q10.5 20 16 30.5" fill="none" stroke="#e9622d" stroke-width="1.1"/><path d="M7.8 18Q16 12 25 22" fill="none" stroke="#333" stroke-width="1"/><path d="M19.2 28H35.8M27.5 19.7V36.3" stroke="#fff" stroke-width="5.2" stroke-linecap="round" opacity=".92"/><path d="M19.2 28H35.8M27.5 19.7V36.3" stroke="#2b2b2b" stroke-width="2.3"/></svg>
<div class="rl" style="left:1740px;">New<br>Stereonet 2D</div>
<svg class="a" style="left:1791px;top:97px" width="36" height="36" viewBox="0 0 36 36"><circle cx="18" cy="18" r="17" fill="#f0484e" stroke="#a6262b" stroke-width="1.2"/><path d="M11 11L25 25M25 11L11 25" stroke="#fff" stroke-width="2.8" stroke-linecap="round"/></svg>
<div class="rl" style="left:1809px;">Close</div>
<svg class="a" style="left:87.5px;top:163.25px" width="11" height="6.5" viewBox="-1 -1 11 6.5"><path d="M0 0L4.5 4.5L9 0" fill="none" stroke="#333" stroke-width="1.2" stroke-linecap="round" stroke-linejoin="round"/></svg>
<svg class="a" style="left:200.5px;top:163.25px" width="11" height="6.5" viewBox="-1 -1 11 6.5"><path d="M0 0L4.5 4.5L9 0" fill="none" stroke="#333" stroke-width="1.2" stroke-linecap="round" stroke-linejoin="round"/></svg>
<svg class="a" style="left:307.0px;top:163.75px" width="11" height="6.5" viewBox="-1 -1 11 6.5"><path d="M0 0L4.5 4.5L9 0" fill="none" stroke="#b6b6b6" stroke-width="1.2" stroke-linecap="round" stroke-linejoin="round"/></svg>
<div class="sep" style="left:242px"></div>
<div class="sep" style="left:451px"></div>
<div class="sep" style="left:520px"></div>
<div class="sep" style="left:602px"></div>
<div class="sep" style="left:707px"></div>
<div class="sep" style="left:908px"></div>
<div class="sep" style="left:1320px"></div>
<div class="sep" style="left:1460px"></div>
<div class="sep" style="left:1611px"></div>
<div class="sep" style="left:1689px"></div>
<div class="sep" style="left:1836px"></div>
<div class="gl" style="left:125px">Presets</div>
<div class="gl" style="left:347px">User-defined Preset Templates</div>
<div class="gl" style="left:486px">Selection</div>
<div class="gl" style="left:562px">Weighting</div>
<div class="gl" style="left:655px">Vector Mode</div>
<div class="gl" style="left:808px">User Planes</div>
<div class="gl" style="left:1114px">Sets</div>
<div class="gl" style="left:1391px">Slope Kinematics</div>
<div class="gl" style="left:1535px">Fold Analysis</div>
<div class="gl" style="left:1651px">Tools</div>
<div class="gl" style="left:1762px">View</div>
<div class="panel" style="left:2px;top:232px;width:588px;height:117px"></div>
<div class="t b g" style="left:13px;top:241px">Filter</div>
<div class="t" style="left:7px;top:282px">Filter applied:</div>
<div class="a" style="left:108px;top:277px;width:398px;height:31px;background:#fbfbfb;border:1px solid #efefef;border-radius:4px"></div>
<svg class="a" style="left:480.0px;top:289.0px" width="12" height="7" viewBox="-1 -1 12 7"><path d="M0 0L5.0 5L10 0" fill="none" stroke="#c8c8c8" stroke-width="1.2" stroke-linecap="round" stroke-linejoin="round"/></svg>
<div class="btn" style="left:513px;top:277px;width:32px;height:31px"></div>
<div class="btn" style="left:553px;top:277px;width:32px;height:31px"></div>
<svg class="a" style="left:520px;top:283px" width="22" height="20" viewBox="0 0 22 20"><path d="M.8 1.2H18.2L12.2 8.8V17.6L6.8 16.2V8.8Z" fill="#d7ebf4" stroke="#2a7f9e" stroke-width="1.1" stroke-linejoin="round"/><path d="M13 12L18.5 17.5M18.5 12L13 17.5" stroke="#222" stroke-width="1.4"/></svg>
<svg class="a" style="left:560px;top:283px" width="20" height="20" viewBox="0 0 20 20"><path d="M.8 1.2H18.2L12.2 8.8V18L6.8 16.6V8.8Z" fill="#d7ebf4" stroke="#2a7f9e" stroke-width="1.1" stroke-linejoin="round"/></svg>
<div class="t" style="left:7px;top:321px">Viewing:</div>
<div class="t" style="left:108px;top:321px">Unfiltered data</div>
<div class="panel" style="left:2px;top:354px;width:588px;height:425px;overflow:hidden"></div>
<div class="t b" style="left:13px;top:366px;color:#111">Visibility</div>
<svg class="a" style="left:529px;top:367px" width="44" height="18" viewBox="0 0 44 18">
<rect x="6.5" y="6.5" width="9" height="9" fill="#c9c9c9" stroke="#b5b5b5"/><rect x="1.5" y="1.5" width="9" height="9" fill="#fff" stroke="#777"/><path d="M3.5 6H8.5M6 3.5V8.5" stroke="#555" stroke-width="1"/>
<rect x="31.500" y="6.5" width="9" height="9" fill="#c9c9c9" stroke="#b5b5b5"/><rect x="26.5" y="1.5" width="9" height="9" fill="#fff" stroke="#777"/><path d="M28.5 6H33.500" stroke="#555" stroke-width="1"/></svg>
<div class="a" style="left:8px;top:401px;width:577px;height:1px;background:#dcdcdc"></div>
<div class="a" style="left:29px;top:462px;width:540px;height:30px;background:#cce8ff"></div>
<div class="a" style="left:4px;top:402px;width:585px;height:375px;overflow:hidden">
<div class="t" style="left:31px;top:6px">Pole Vectors</div>
<svg class="a" style="left:537px;top:7px" width="24" height="16" viewBox="0 0 24 16"><path d="M1 8Q6 1.6 12 1.6Q18 1.6 23 8Q18 14.4 12 14.4Q6 14.4 1 8Z" fill="#222"/><circle cx="12" cy="8" r="4.6" fill="#fff"/><circle cx="12" cy="8" r="2.5" fill="#222"/></svg>
<div class="t" style="left:31px;top:36px">Intersections</div>
<svg class="a" style="left:535px;top:32px" width="28" height="26" viewBox="0 0 28 26"><path d="M2 12Q8 5.4 14 5.4Q20 5.4 26 12Q20 18.6 14 18.6Q8 18.6 2 12Z" fill="none" stroke="#333" stroke-width="1"/><circle cx="14" cy="12" r="5" fill="none" stroke="#333" stroke-width="1"/><path d="M1.5 24L26 1" stroke="#333" stroke-width="1"/></svg>
<div class="t" style="left:31px;top:66px">Contours</div>
<svg class="a" style="left:537px;top:67px" width="24" height="16" viewBox="0 0 24 16"><path d="M1 8Q6 1.6 12 1.6Q18 1.6 23 8Q18 14.4 12 14.4Q6 14.4 1 8Z" fill="#222"/><circle cx="12" cy="8" r="4.6" fill="#fff"/><circle cx="12" cy="8" r="2.5" fill="#222"/></svg>
<div class="t" style="left:31px;top:96px">Kinematic Analysis</div>
<svg class="a" style="left:535px;top:92px" width="28" height="26" viewBox="0 0 28 26"><path d="M2 12Q8 5.4 14 5.4Q20 5.4 26 12Q20 18.6 14 18.6Q8 18.6 2 12Z" fill="none" stroke="#333" stroke-width="1"/><circle cx="14" cy="12" r="5" fill="none" stroke="#333" stroke-width="1"/><path d="M1.5 24L26 1" stroke="#333" stroke-width="1"/></svg>
<div class="t" style="left:31px;top:126px">Set Windows</div>
<svg class="a" style="left:537px;top:127px" width="24" height="16" viewBox="0 0 24 16"><path d="M1 8Q6 1.6 12 1.6Q18 1.6 23 8Q18 14.4 12 14.4Q6 14.4 1 8Z" fill="#222"/><circle cx="12" cy="8" r="4.6" fill="#fff"/><circle cx="12" cy="8" r="2.5" fill="#222"/></svg>
<div class="t" style="left:31px;top:156px">Mean Set Planes</div>
<svg class="a" style="left:535px;top:152px" width="28" height="26" viewBox="0 0 28 26"><path d="M2 12Q8 5.4 14 5.4Q20 5.4 26 12Q20 18.6 14 18.6Q8 18.6 2 12Z" fill="none" stroke="#333" stroke-width="1"/><circle cx="14" cy="12" r="5" fill="none" stroke="#333" stroke-width="1"/><path d="M1.5 24L26 1" stroke="#333" stroke-width="1"/></svg>
<div class="t" style="left:31px;top:186px">User Planes</div>
<svg class="a" style="left:535px;top:182px" width="28" height="26" viewBox="0 0 28 26"><path d="M2 12Q8 5.4 14 5.4Q20 5.4 26 12Q20 18.6 14 18.6Q8 18.6 2 12Z" fill="none" stroke="#333" stroke-width="1"/><circle cx="14" cy="12" r="5" fill="none" stroke="#333" stroke-width="1"/><path d="M1.5 24L26 1" stroke="#333" stroke-width="1"/></svg>
<div class="t" style="left:31px;top:216px">Fold Windows</div>
<svg class="a" style="left:537px;top:217px" width="24" height="16" viewBox="0 0 24 16"><path d="M1 8Q6 1.6 12 1.6Q18 1.6 23 8Q18 14.4 12 14.4Q6 14.4 1 8Z" fill="#222"/><circle cx="12" cy="8" r="4.6" fill="#fff"/><circle cx="12" cy="8" r="2.5" fill="#222"/></svg>
<div class="t" style="left:31px;top:246px">Best Fit Fold Planes</div>
<svg class="a" style="left:537px;top:247px" width="24" height="16" viewBox="0 0 24 16"><path d="M1 8Q6 1.6 12 1.6Q18 1.6 23 8Q18 14.4 12 14.4Q6 14.4 1 8Z" fill="#222"/><circle cx="12" cy="8" r="4.6" fill="#fff"/><circle cx="12" cy="8" r="2.5" fill="#222"/></svg>
<div class="t" style="left:31px;top:276px">Traverses</div>
<svg class="a" style="left:535px;top:272px" width="28" height="26" viewBox="0 0 28 26"><path d="M2 12Q8 5.4 14 5.4Q20 5.4 26 12Q20 18.6 14 18.6Q8 18.6 2 12Z" fill="none" stroke="#333" stroke-width="1"/><circle cx="14" cy="12" r="5" fill="none" stroke="#333" stroke-width="1"/><path d="M1.5 24L26 1" stroke="#333" stroke-width="1"/></svg>
<div class="t" style="left:56px;top:306px">1</div>
<svg class="a" style="left:537px;top:307px" width="24" height="16" viewBox="0 0 24 16"><path d="M1 8Q6 1.6 12 1.6Q18 1.6 23 8Q18 14.4 12 14.4Q6 14.4 1 8Z" fill="#222"/><circle cx="12" cy="8" r="4.6" fill="#fff"/><circle cx="12" cy="8" r="2.5" fill="#222"/></svg>
<div class="t" style="left:31px;top:336px">Global Mean Plane</div>
<svg class="a" style="left:535px;top:332px" width="28" height="26" viewBox="0 0 28 26"><path d="M2 12Q8 5.4 14 5.4Q20 5.4 26 12Q20 18.6 14 18.6Q8 18.6 2 12Z" fill="none" stroke="#333" stroke-width="1"/><circle cx="14" cy="12" r="5" fill="none" stroke="#333" stroke-width="1"/><path d="M1.5 24L26 1" stroke="#333" stroke-width="1"/></svg>
<div class="t" style="left:31px;top:366px">Global Best Fit Plane</div>
<svg class="a" style="left:535px;top:362px" width="28" height="26" viewBox="0 0 28 26"><path d="M2 12Q8 5.4 14 5.4Q20 5.4 26 12Q20 18.6 14 18.6Q8 18.6 2 12Z" fill="none" stroke="#333" stroke-width="1"/><circle cx="14" cy="12" r="5" fill="none" stroke="#333" stroke-width="1"/><path d="M1.5 24L26 1" stroke="#333" stroke-width="1"/></svg>
</div>
<svg class="a" style="left:11px;top:682px" width="10" height="10" viewBox="0 0 10 10"><path d="M9 1V9H1Z" fill="#555"/></svg>
<div class="a" style="left:570px;top:402px;width:16px;height:375px;background:#fdfdfd"></div>
<svg class="a" style="left:572px;top:404px" width="12" height="10" viewBox="0 0 12 10"><path d="M6 1L11 9H1Z" fill="#555"/></svg>
<div class="a" style="left:574px;top:418px;width:8px;height:155px;border-radius:4px;background:#676767"></div>
<svg class="a" style="left:572px;top:765px" width="12" height="10" viewBox="0 0 12 10"><path d="M6 9L11 1H1Z" fill="#555"/></svg>
<div class="panel" style="left:2px;top:784px;width:588px;height:425px"></div>
<div class="t b g" style="left:13px;top:794px">Properties</div>
<div class="a" style="left:4px;top:826px;width:581px;height:1px;background:#d9d9d9"></div>
<div class="a" style="left:4px;top:855px;width:570px;height:1px;background:#d9d9d9"></div>
<div class="a" style="left:4px;top:884px;width:570px;height:1px;background:#d9d9d9"></div>
<div class="a" style="left:4px;top:916px;width:570px;height:1px;background:#d9d9d9"></div>
<div class="a" style="left:4px;top:948px;width:570px;height:1px;background:#d9d9d9"></div>
<div class="a" style="left:288px;top:826px;width:1px;height:60px;background:#d9d9d9"></div>
<div class="t g" style="left:32px;top:832px">Name</div><div class="t g" style="left:295px;top:832px">Contours</div>
<div class="t" style="left:32px;top:861px">Contour Type</div><div class="t" style="left:295px;top:861px">Pole vector density</div>
<div class="btn" style="left:32px;top:886px;width:541px;height:30px;line-height:28px">Edit Contour Data...</div>
<div class="btn" style="left:32px;top:918px;width:541px;height:30px;line-height:28px">Contour Options...</div>
<svg class="a" style="left:575px;top:829px" width="11" height="9" viewBox="0 0 11 9"><path d="M5.5 1L10 8H1Z" fill="#ddd"/></svg>
<svg class="a" style="left:575px;top:1195px" width="11" height="9" viewBox="0 0 11 9"><path d="M5.5 8L10 1H1Z" fill="#ddd"/></svg>
<div class="panel" style="left:2px;top:1214px;width:588px;height:119px"></div>
<div class="t b g" style="left:13px;top:1224px">Projection</div>
<div class="t" style="left:7px;top:1266px">Hemisphere:</div>
<div class="combo" style="left:98px;top:1261px;width:487px;height:30px"></div><div class="t" style="left:108px;top:1267px;color:#5f5f5f">Lower Hemisphere</div>
<svg class="a" style="left:559.5px;top:1271.75px" width="13" height="7.5" viewBox="-1 -1 13 7.5"><path d="M0 0L5.5 5.5L11 0" fill="none" stroke="#333" stroke-width="1.2" stroke-linecap="round" stroke-linejoin="round"/></svg>
<div class="t" style="left:7px;top:1305px">Projection:</div>
<div class="combo" style="left:98px;top:1300px;width:487px;height:30px"></div><div class="t" style="left:108px;top:1306px;color:#5f5f5f">Equal Angle</div>
<svg class="a" style="left:559.5px;top:1310.75px" width="13" height="7.5" viewBox="-1 -1 13 7.5"><path d="M0 0L5.5 5.5L11 0" fill="none" stroke="#333" stroke-width="1.2" stroke-linecap="round" stroke-linejoin="round"/></svg>
<svg class="a" style="left:622px;top:240px" width="27" height="23" viewBox="0 0 27 23"><rect x=".7" y=".7" width="25.6" height="21.6" fill="#dcebf3" stroke="#2a7f9e" stroke-width="1.2"/><rect x=".7" y=".7" width="25.6" height="4" fill="#c3dfec" stroke="#2a7f9e" stroke-width="1.2"/><path d="M.7 13.500H26.300M13.5 4.700V22.3" stroke="#9cc7d9" stroke-width="1"/></svg>
<div class="t" style="left:655px;top:242px;font-size:15.300px">Pole Data Grid</div>
<div class="a" style="left:595px;top:271px;width:1959px;height:1064px;border:1px solid #e2e2e2;border-radius:9px;background:#f9f9f9"></div>
<div class="a" style="left:766px;top:231px;width:186px;height:42px;background:#fff;border:1px solid #e2e2e2;border-bottom:none;border-radius:9px 9px 0 0"></div>
<svg class="a" style="left:783px;top:238px" width="26" height="26" viewBox="0 0 26 26"><circle cx="13" cy="13" r="12.2" fill="#deebf2" stroke="#1d6f8a" stroke-width="1.2"/><circle cx="14.3" cy="7" r="2" fill="none" stroke="#333" stroke-width="1"/><circle cx="7" cy="14.3" r="2" fill="none" stroke="#333" stroke-width="1"/><circle cx="16.3" cy="18" r="2" fill="none" stroke="#333" stroke-width="1"/></svg>
<div class="t b" style="left:815px;top:242px;font-size:15.300px;color:#111">Stereonet 2D</div>
<svg class="a" style="left:930px;top:244px" width="14" height="14" viewBox="0 0 14 14"><path d="M1.5 1.500L12.5 12.500M12.5 1.500L1.5 12.5" stroke="#666" stroke-width="1.1"/></svg>
<div class="a" style="left:2496px;top:237px;width:37px;height:30px;background:#fff;border:1px solid #e6e6e6;border-radius:5px;box-shadow:0 1px 1px rgba(0,0,0,.05)"></div>
<svg class="a" style="left:2506px;top:244px" width="17" height="17" viewBox="0 0 17 17"><path d="M1 8.500H16M8.5 1V16" stroke="#111" stroke-width="1.8"/></svg>
<svg class="a" style="left:2540.0px;top:248.5px" width="12" height="7" viewBox="-1 -1 12 7"><path d="M0 0L5.0 5L10 0" fill="none" stroke="#999" stroke-width="1.2" stroke-linecap="round" stroke-linejoin="round"/></svg>
<div class="a" style="left:598px;top:274px;width:1955px;height:1029px;background:#fff;border:1px solid #e0e0e0;border-radius:8px"></div>
<div class="a" style="left:600px;top:1307px;width:108px;height:28px;background:#fff;border:1px solid #e0e0e0;border-bottom:none;border-radius:5px 5px 0 0"></div>
<div class="t" style="left:607px;top:1311px">Pole Data Grid</div>
<svg class="a" style="left:780px;top:276px" width="1080" height="1026" viewBox="780 276 1080 1026">
<defs><clipPath id="sc"><circle cx="1320.4" cy="788.2" r="463.3"/></clipPath></defs>
<g clip-path="url(#sc)">
<path d="M1117.0 480.2 1109.0 481.6 1101.0 481.8 1055.0 477.4 1017.0 476.8 1005.0 476.1 995.0 474.8 987.0 472.8 979.4 470.0 973.0 466.7 966.2 462.0 959.6 456.0 953.0 448.6 939.0 430.9 931.3 422.0 922.9 414.0 913.0 406.2 899.7 398.0 885.0 390.8 868.0 384.0 849.0 377.9 847.8 316.0 849.0 314.8 1023.0 314.4 1141.0 314.7 1192.3 316.0 1192.1 346.0 1194.5 392.0 1193.4 402.0 1192.4 406.0 1190.0 412.0 1184.4 422.0 1176.2 434.0 1166.5 446.0 1157.0 455.7 1147.0 464.2 1137.0 471.2 1127.0 476.6 1117.0 480.2ZM951.0 942.1 931.0 942.2 913.0 940.7 897.0 937.5 885.0 933.3 875.0 927.9 869.6 924.0 865.0 919.9 861.0 915.6 856.8 910.0 853.3 904.0 850.5 898.0 849.0 894.1 848.9 884.0 849.0 750.4 854.7 740.0 863.1 728.0 883.0 704.0 901.0 685.0 909.0 677.7 917.0 671.5 923.0 667.5 931.0 663.2 937.0 660.9 943.0 659.1 955.0 657.3 967.0 656.9 997.0 657.6 1009.0 657.0 1017.0 655.3 1020.0 654.0 1023.0 651.8 1025.9 648.0 1028.1 642.0 1029.3 636.0 1032.4 612.0 1035.7 598.0 1040.2 586.0 1046.2 574.0 1052.2 564.0 1060.4 552.0 1068.2 542.0 1075.0 534.1 1081.0 527.8 1089.0 520.5 1097.0 514.5 1103.0 510.9 1111.0 507.5 1117.0 506.3 1123.0 506.1 1131.0 507.2 1139.0 509.5 1149.0 513.8 1181.0 531.6 1193.0 536.8 1201.0 538.8 1207.0 539.1 1212.5 538.0 1215.9 536.0 1217.6 534.0 1219.0 530.9 1219.5 528.0 1219.4 524.0 1217.9 516.0 1210.4 490.0 1207.5 474.0 1205.9 458.0 1204.6 432.0 1204.5 420.0 1205.2 412.0 1205.9 408.0 1208.0 402.0 1211.1 396.0 1215.2 390.0 1220.1 384.0 1225.9 378.0 1232.6 372.0 1240.6 366.0 1249.0 360.9 1257.0 357.0 1265.0 353.8 1273.0 351.4 1283.0 349.3 1291.0 348.3 1301.0 347.7 1311.0 347.8 1323.0 348.8 1333.0 350.4 1343.0 352.7 1351.0 355.1 1361.0 358.9 1369.0 362.8 1377.0 367.6 1385.0 373.2 1395.0 381.7 1403.0 389.6 1411.0 399.0 1417.5 408.0 1423.5 418.0 1428.5 428.0 1432.4 438.0 1436.0 450.0 1438.6 462.0 1440.2 476.0 1440.5 488.0 1439.6 500.0 1437.8 510.0 1434.7 520.0 1430.9 528.0 1425.7 536.0 1421.0 541.3 1415.0 546.5 1409.0 550.6 1401.0 554.7 1391.0 558.6 1381.0 561.6 1369.0 564.7 1357.0 567.1 1343.0 568.3 1331.0 567.6 1319.0 565.2 1299.0 559.8 1289.0 558.3 1281.0 558.7 1273.0 561.0 1269.0 563.2 1265.0 566.6 1262.3 570.0 1259.0 576.0 1256.8 582.0 1254.7 590.0 1246.6 632.0 1242.5 648.0 1240.2 654.0 1236.9 660.0 1233.0 664.9 1229.0 668.5 1221.0 673.5 1199.4 684.0 1175.0 698.8 1165.0 703.3 1157.0 705.8 1145.0 707.9 1131.0 708.2 1121.0 707.4 1097.9 704.0 1089.0 703.3 1081.7 704.0 1077.0 706.2 1075.0 708.2 1073.0 712.0 1071.7 718.0 1071.2 724.0 1071.3 768.0 1072.7 804.0 1072.1 816.0 1070.9 824.0 1068.8 832.0 1065.7 840.0 1062.8 846.0 1057.9 854.0 1050.5 864.0 1026.3 892.0 1005.0 919.2 997.0 927.3 989.0 933.0 979.0 937.4 967.0 940.4 951.0 942.1ZM1791.0 872.1 1775.9 834.0 1772.7 824.0 1770.8 816.0 1769.0 802.0 1768.1 770.0 1766.6 754.0 1763.5 736.0 1755.2 700.0 1753.8 690.0 1753.3 680.0 1753.9 670.0 1755.4 662.0 1757.8 654.0 1762.2 644.0 1767.0 635.6 1773.7 626.0 1781.9 616.0 1791.0 606.0 1791.8 644.0 1792.1 692.0 1791.0 872.1ZM1649.0 1258.0 1605.0 1259.0 1555.0 1259.3 1505.0 1258.9 1463.0 1258.0 1422.6 1190.0 1413.8 1172.0 1401.0 1142.0 1393.0 1126.7 1387.0 1117.7 1379.0 1108.5 1373.0 1103.0 1359.4 1092.0 1355.0 1087.5 1352.5 1084.0 1350.6 1080.0 1349.4 1076.0 1348.5 1070.0 1348.6 1062.0 1349.4 1054.0 1351.4 1042.0 1353.7 1032.0 1356.7 1022.0 1359.7 1014.0 1362.6 1008.0 1366.1 1002.0 1370.7 996.0 1374.5 992.0 1391.0 977.9 1399.0 970.3 1415.0 952.0 1422.6 944.0 1429.0 938.3 1437.0 932.3 1449.0 925.7 1463.0 920.9 1501.0 913.2 1515.0 911.7 1525.0 912.7 1531.0 914.7 1535.0 916.7 1543.0 922.6 1547.0 926.9 1550.7 932.0 1554.0 938.0 1558.0 948.0 1569.0 985.6 1575.0 1002.8 1583.0 1021.4 1593.0 1039.9 1601.0 1051.3 1605.0 1056.0 1611.0 1061.8 1619.0 1068.2 1639.0 1082.0 1648.1 1090.0 1651.6 1094.0 1655.7 1100.0 1658.7 1106.0 1661.6 1114.0 1663.8 1124.0 1664.8 1136.0 1664.8 1148.0 1663.7 1164.0 1659.3 1208.0 1656.3 1232.0 1652.4 1250.0 1649.7 1258.0 1649.0 1258.0ZM1075.0 1088.4 1069.0 1089.4 1061.0 1089.8 1055.0 1089.4 1049.0 1088.4 1043.0 1086.7 1037.0 1084.4 1027.0 1078.5 1019.0 1071.5 1015.0 1066.7 1012.0 1062.0 1010.0 1058.0 1007.9 1052.0 1006.8 1046.0 1006.4 1040.0 1006.9 1032.0 1008.2 1024.0 1015.1 996.0 1020.5 980.0 1025.9 970.0 1030.8 964.0 1035.1 960.0 1040.6 956.0 1047.0 952.4 1053.0 949.9 1059.1 948.0 1065.0 946.8 1073.0 946.2 1085.0 947.1 1097.0 950.1 1105.0 953.1 1111.0 956.0 1121.0 962.4 1129.2 970.0 1133.0 974.9 1136.1 980.0 1137.9 984.0 1139.8 990.0 1140.9 1000.0 1140.6 1006.0 1139.5 1012.0 1135.0 1024.9 1124.4 1046.0 1119.0 1055.2 1114.3 1062.0 1105.4 1072.0 1097.0 1078.8 1087.0 1084.4 1081.0 1086.7 1075.0 1088.4Z" fill="#e6eefc" fill-rule="evenodd"/>
<path d="M1101.0 456.1 1091.0 456.8 1079.0 456.5 1065.0 455.1 1049.0 452.8 1037.0 450.4 1025.0 447.3 1015.0 443.7 1007.0 439.8 999.0 434.7 991.0 428.0 983.2 420.0 969.0 403.6 961.0 395.2 950.7 386.0 939.7 378.0 923.0 368.0 903.0 357.9 875.0 345.1 849.0 334.4 848.6 316.0 849.0 315.6 909.0 315.2 1023.0 314.8 1115.0 315.0 1163.0 316.0 1164.5 358.0 1164.1 380.0 1163.1 390.0 1161.2 400.0 1158.9 408.0 1155.8 416.0 1151.6 424.0 1146.0 432.0 1140.5 438.0 1133.4 444.0 1127.0 448.0 1119.0 451.8 1111.0 454.3 1101.0 456.1ZM1353.0 552.3 1345.0 553.3 1337.0 553.3 1331.0 552.7 1323.0 551.0 1313.0 547.8 1293.0 539.7 1267.0 530.2 1259.0 525.7 1251.0 518.7 1244.3 510.0 1238.6 500.0 1235.1 492.0 1232.5 484.0 1230.6 476.0 1229.2 466.0 1228.7 456.0 1229.0 446.0 1230.0 436.0 1232.0 426.0 1234.4 418.0 1237.6 410.0 1240.8 404.0 1245.0 397.8 1249.8 392.0 1256.3 386.0 1263.0 381.2 1269.0 377.9 1277.0 374.6 1287.0 371.9 1297.0 370.5 1307.0 370.2 1317.0 371.0 1327.0 372.6 1337.0 375.1 1349.0 379.3 1359.0 383.8 1369.0 389.3 1379.0 396.1 1387.0 402.7 1394.4 410.0 1401.0 418.0 1406.3 426.0 1410.7 434.0 1414.9 444.0 1417.9 454.0 1420.2 466.0 1421.1 476.0 1421.0 486.0 1419.7 496.0 1417.7 504.0 1414.5 512.0 1409.7 520.0 1405.0 525.7 1399.0 531.3 1392.5 536.0 1383.0 541.5 1373.0 546.1 1363.0 549.8 1353.0 552.3ZM1151.0 694.3 1143.0 695.4 1135.0 695.6 1127.0 694.9 1119.0 693.5 1111.0 691.4 1101.0 688.0 1091.7 684.0 1084.0 680.0 1077.6 676.0 1072.5 672.0 1068.3 668.0 1063.4 662.0 1057.9 652.0 1055.6 646.0 1053.4 638.0 1052.3 632.0 1051.6 624.0 1051.6 616.0 1052.5 608.0 1054.2 600.0 1056.7 592.0 1060.0 584.0 1064.1 576.0 1069.0 568.0 1075.0 559.8 1081.0 552.8 1088.0 546.0 1095.0 540.5 1101.0 536.7 1109.0 533.1 1115.0 531.3 1121.0 530.3 1129.0 530.2 1137.0 531.3 1145.0 533.4 1159.0 539.2 1188.2 554.0 1215.0 565.5 1223.0 570.3 1228.8 576.0 1232.3 582.0 1234.9 590.0 1236.0 598.0 1236.1 606.0 1235.3 614.0 1233.8 622.0 1231.5 630.0 1229.0 636.4 1226.0 642.0 1221.7 648.0 1218.0 652.0 1213.3 656.0 1197.0 667.5 1175.0 684.1 1169.0 687.7 1163.0 690.6 1157.0 692.8 1151.0 694.3ZM955.0 912.3 945.0 913.6 933.0 913.8 921.0 912.3 911.0 909.5 901.0 904.9 893.9 900.0 887.8 894.0 882.2 886.0 878.4 878.0 875.3 868.0 873.3 856.0 872.4 844.0 872.4 826.0 873.5 808.0 875.7 790.0 878.4 776.0 881.6 764.0 886.0 752.0 891.5 740.0 897.2 730.0 904.0 720.0 911.0 711.5 919.0 703.6 927.0 697.4 935.0 692.5 943.0 688.9 951.0 686.4 961.0 684.4 973.0 683.5 985.0 683.6 997.0 684.7 1009.0 686.9 1017.0 689.3 1023.0 691.9 1029.0 695.2 1035.0 699.8 1039.1 704.0 1043.5 710.0 1047.0 716.3 1050.2 724.0 1052.5 732.0 1054.0 740.0 1055.8 760.0 1056.3 798.0 1055.6 808.0 1054.0 818.0 1051.6 826.0 1049.0 832.0 1045.0 839.0 1040.0 846.0 1029.0 858.0 1001.0 885.1 989.0 895.7 979.0 902.8 967.0 908.8 955.0 912.3ZM1601.0 1258.0 1555.0 1258.5 1509.2 1258.0 1501.0 1251.4 1489.4 1240.0 1477.7 1226.0 1461.4 1204.0 1447.9 1184.0 1436.3 1164.0 1409.0 1110.3 1384.1 1068.0 1381.5 1062.0 1379.5 1056.0 1378.3 1050.0 1377.9 1044.0 1378.1 1038.0 1379.1 1032.0 1380.9 1026.0 1383.5 1020.0 1387.1 1014.0 1391.5 1008.0 1407.0 990.1 1427.0 964.8 1437.0 955.2 1447.0 948.7 1455.0 945.4 1465.0 943.2 1475.0 942.6 1489.0 943.6 1501.0 945.4 1511.0 948.2 1519.0 952.0 1527.0 958.3 1531.0 962.7 1534.9 968.0 1541.0 979.0 1571.0 1048.2 1577.0 1061.1 1583.0 1072.3 1587.0 1078.5 1593.0 1086.4 1616.6 1112.0 1621.0 1118.0 1625.0 1125.0 1628.0 1132.0 1630.5 1140.0 1632.0 1148.0 1633.0 1156.0 1633.4 1166.0 1633.2 1178.0 1632.1 1190.0 1630.6 1200.0 1626.3 1218.0 1623.5 1226.0 1619.9 1234.0 1615.4 1242.0 1611.1 1248.0 1605.0 1254.8 1601.0 1258.0Z" fill="#ccf2ff" fill-rule="evenodd"/>
<path d="M1091.0 440.1 1083.0 440.1 1075.0 439.4 1059.0 436.4 1043.0 431.1 1036.1 428.0 1029.0 424.0 1021.0 418.3 1014.0 412.0 1006.8 404.0 987.5 380.0 979.5 372.0 972.3 366.0 963.8 360.0 954.0 354.0 910.0 330.0 885.8 316.0 1023.0 315.2 1097.0 315.4 1138.9 316.0 1144.2 350.0 1145.9 372.0 1145.6 382.0 1144.8 390.0 1143.2 398.0 1140.6 406.0 1137.0 413.7 1132.8 420.0 1127.4 426.0 1121.0 431.0 1115.0 434.4 1107.0 437.5 1099.0 439.3 1091.0 440.1ZM1343.0 542.1 1337.0 542.1 1331.0 541.5 1319.0 538.2 1303.0 530.8 1280.1 518.0 1269.0 510.2 1261.0 502.6 1254.6 494.0 1249.4 484.0 1247.2 478.0 1245.2 470.0 1243.6 456.0 1243.7 448.0 1244.6 440.0 1246.3 432.0 1248.1 426.0 1250.6 420.0 1253.7 414.0 1257.0 409.1 1261.0 404.3 1265.5 400.0 1270.8 396.0 1281.0 390.6 1289.0 388.0 1297.0 386.4 1305.0 385.8 1313.0 386.0 1321.0 387.0 1331.0 389.1 1341.0 392.2 1351.0 396.3 1361.0 401.5 1369.0 406.6 1376.2 412.0 1382.7 418.0 1389.0 425.0 1394.0 432.0 1397.6 438.0 1401.3 446.0 1404.0 454.0 1405.8 462.0 1407.0 472.0 1407.0 480.0 1406.1 488.0 1404.8 494.0 1401.9 502.0 1398.7 508.0 1394.5 514.0 1389.0 520.0 1382.0 526.0 1375.0 530.8 1367.0 535.3 1359.0 538.7 1351.0 541.0 1343.0 542.1ZM1145.0 686.0 1139.0 686.4 1133.0 686.2 1127.0 685.4 1119.0 683.5 1111.0 680.7 1105.0 678.1 1093.0 671.1 1083.0 662.9 1078.5 658.0 1075.0 653.4 1071.7 648.0 1068.8 642.0 1066.7 636.0 1065.3 630.0 1064.4 624.0 1064.1 616.0 1064.5 610.0 1065.8 602.0 1068.1 594.0 1070.4 588.0 1076.7 576.0 1080.8 570.0 1085.7 564.0 1091.0 558.6 1097.0 553.5 1107.0 547.5 1113.0 545.1 1119.0 543.6 1125.0 542.9 1133.0 543.1 1141.0 544.5 1149.0 546.9 1163.0 553.0 1199.0 571.2 1209.0 577.3 1216.4 584.0 1219.4 588.0 1221.5 592.0 1224.0 600.0 1224.6 610.0 1223.9 616.0 1222.5 622.0 1220.1 628.0 1218.0 632.0 1212.1 640.0 1205.0 646.9 1178.2 670.0 1170.4 676.0 1165.0 679.4 1159.0 682.3 1153.0 684.4 1145.0 686.0ZM955.0 890.2 947.0 891.4 939.0 891.5 931.0 890.3 923.0 887.8 915.0 883.5 909.0 878.5 903.8 872.0 900.4 866.0 897.4 858.0 895.4 850.0 894.0 840.0 893.4 828.0 893.6 814.0 894.7 800.0 896.6 786.0 899.5 772.0 902.4 762.0 906.1 752.0 909.8 744.0 914.4 736.0 920.0 728.0 925.0 722.2 931.0 716.6 937.0 712.2 943.0 708.7 951.0 705.2 957.0 703.5 965.0 701.9 973.0 701.2 983.0 701.3 993.0 702.4 1001.0 704.0 1009.0 706.5 1015.0 709.1 1021.0 712.7 1025.0 715.8 1029.0 719.7 1033.0 724.7 1036.2 730.0 1038.9 736.0 1040.9 742.0 1042.6 750.0 1043.7 758.0 1044.3 768.0 1043.9 792.0 1042.9 802.0 1041.3 810.0 1038.0 820.0 1033.0 829.2 1026.2 838.0 1017.0 847.3 993.0 868.6 981.0 878.1 975.0 882.0 967.4 886.0 961.0 888.5 955.0 890.2ZM1565.0 1250.0 1557.0 1251.0 1549.0 1250.8 1539.0 1248.8 1531.0 1245.9 1523.0 1241.8 1515.0 1236.3 1507.0 1229.4 1499.0 1221.1 1490.0 1210.0 1480.2 1196.0 1435.0 1124.1 1419.3 1096.0 1411.4 1080.0 1406.2 1068.0 1402.1 1056.0 1400.8 1050.0 1400.3 1044.0 1401.2 1034.0 1404.6 1024.0 1407.9 1018.0 1413.1 1010.0 1425.0 993.6 1433.0 983.4 1438.1 978.0 1442.7 974.0 1447.0 971.1 1451.0 969.2 1457.0 967.5 1463.0 967.0 1469.0 967.8 1475.0 969.5 1499.0 978.6 1507.0 982.2 1515.0 987.3 1521.0 992.9 1527.0 1000.2 1533.0 1009.2 1545.7 1032.0 1554.8 1052.0 1567.0 1084.4 1572.7 1096.0 1579.4 1106.0 1597.5 1128.0 1602.7 1136.0 1606.6 1144.0 1609.3 1152.0 1611.2 1160.0 1612.2 1168.0 1612.6 1178.0 1612.0 1188.0 1610.8 1196.0 1609.0 1204.0 1606.3 1212.0 1602.7 1220.0 1599.0 1226.4 1594.8 1232.0 1589.0 1238.0 1583.0 1242.6 1577.0 1246.0 1571.0 1248.4 1565.0 1250.0Z" fill="#b3ffee" fill-rule="evenodd"/>
<path d="M1099.0 422.2 1093.0 423.3 1087.0 423.8 1075.0 422.7 1067.0 420.8 1061.0 418.6 1055.0 415.9 1049.0 412.4 1040.8 406.0 1033.3 398.0 1027.6 390.0 1013.0 365.9 1007.0 358.4 1001.0 352.7 994.9 348.0 985.1 342.0 951.0 324.6 935.5 316.0 1023.0 315.6 1110.9 316.0 1120.7 340.0 1125.5 356.0 1127.1 364.0 1128.1 372.0 1128.3 380.0 1127.9 386.0 1126.8 392.0 1125.0 398.2 1122.4 404.0 1119.0 409.1 1115.0 413.5 1111.0 416.7 1105.0 420.0 1099.0 422.2ZM1341.0 532.1 1331.0 531.4 1321.0 528.5 1309.0 522.7 1295.3 514.0 1282.1 504.0 1273.6 496.0 1265.9 486.0 1261.0 476.4 1257.8 466.0 1256.4 454.0 1257.4 442.0 1260.0 432.0 1264.9 422.0 1271.0 414.1 1278.2 408.0 1287.0 403.3 1293.0 401.2 1301.0 399.6 1307.0 399.1 1315.0 399.3 1323.0 400.4 1331.0 402.2 1339.0 404.8 1347.0 408.1 1355.0 412.1 1361.3 416.0 1367.0 420.1 1373.8 426.0 1379.3 432.0 1383.8 438.0 1387.4 444.0 1390.2 450.0 1392.3 456.0 1394.1 464.0 1394.9 472.0 1394.8 478.0 1394.1 484.0 1392.7 490.0 1390.5 496.0 1387.4 502.0 1383.3 508.0 1379.0 512.9 1373.5 518.0 1367.0 522.9 1361.0 526.4 1353.0 529.8 1347.0 531.4 1341.0 532.1ZM1145.0 678.0 1135.0 678.4 1129.0 677.6 1123.0 676.2 1111.0 671.5 1105.0 668.1 1099.0 664.0 1090.0 656.0 1083.0 647.0 1080.1 642.0 1077.5 636.0 1074.7 626.0 1073.9 620.0 1073.8 614.0 1075.3 602.0 1079.3 590.0 1084.6 580.0 1092.2 570.0 1101.0 562.0 1105.0 559.3 1111.0 556.2 1121.0 553.2 1127.0 552.5 1133.0 552.6 1139.0 553.4 1147.0 555.5 1161.0 561.3 1185.2 574.0 1198.5 582.0 1205.6 588.0 1209.0 592.0 1211.4 596.0 1213.1 600.0 1214.1 604.0 1214.4 612.0 1212.6 620.0 1208.7 628.0 1202.3 636.0 1175.1 662.0 1167.0 668.8 1162.1 672.0 1157.0 674.6 1151.0 676.8 1145.0 678.0ZM957.0 868.4 951.0 869.3 945.0 869.3 939.0 868.3 933.0 866.0 927.1 862.0 923.1 858.0 920.2 854.0 917.0 847.9 914.3 840.0 912.5 832.0 911.3 822.0 910.9 812.0 911.1 800.0 911.9 790.0 913.4 780.0 915.6 770.0 920.4 756.0 923.2 750.0 927.0 743.4 930.8 738.0 935.0 733.2 939.0 729.5 945.0 725.0 951.0 721.7 957.0 719.3 963.0 717.6 969.0 716.6 975.0 716.2 983.0 716.3 991.0 717.3 997.0 718.6 1007.0 722.2 1013.0 725.6 1017.0 728.6 1020.5 732.0 1023.8 736.0 1026.3 740.0 1029.0 745.7 1031.1 752.0 1032.3 758.0 1033.6 772.0 1032.8 788.0 1030.2 802.0 1027.0 811.0 1023.0 818.4 1017.0 826.4 1009.0 834.5 993.0 847.9 979.0 858.2 967.0 865.0 957.0 868.4ZM1563.0 1228.3 1557.0 1229.6 1551.0 1229.8 1545.0 1229.2 1539.0 1227.6 1533.0 1225.1 1527.0 1221.6 1521.0 1217.1 1515.0 1211.4 1507.2 1202.0 1501.0 1192.4 1495.5 1182.0 1485.9 1162.0 1479.9 1152.0 1473.6 1144.0 1457.0 1126.1 1449.0 1116.5 1441.0 1105.1 1433.6 1092.0 1427.7 1078.0 1423.5 1064.0 1421.8 1052.0 1421.8 1046.0 1422.5 1040.0 1423.9 1034.0 1426.2 1028.0 1429.3 1022.0 1433.0 1016.1 1437.0 1010.9 1441.0 1006.7 1445.0 1003.4 1449.0 1001.0 1453.0 999.5 1457.0 998.8 1461.0 998.8 1467.0 999.8 1495.0 1008.4 1507.0 1013.6 1515.0 1018.9 1523.0 1026.4 1531.0 1036.8 1537.4 1048.0 1541.0 1056.0 1544.5 1066.0 1547.2 1076.0 1552.5 1100.0 1556.0 1110.0 1559.0 1115.7 1561.9 1120.0 1579.0 1139.7 1584.8 1148.0 1589.7 1158.0 1591.6 1164.0 1592.8 1170.0 1593.6 1180.0 1592.8 1190.0 1590.3 1200.0 1587.0 1207.7 1583.0 1214.0 1577.0 1220.6 1571.0 1224.9 1563.0 1228.3Z" fill="#99ffc0" fill-rule="evenodd"/>
<path d="M1091.0 400.6 1087.0 401.4 1081.0 401.3 1075.4 400.0 1071.0 398.1 1067.0 395.5 1063.0 392.0 1059.6 388.0 1057.0 383.7 1054.6 378.0 1053.0 372.0 1052.2 366.0 1052.4 358.0 1053.3 352.0 1055.0 346.9 1057.0 343.4 1059.0 341.4 1061.0 340.1 1065.0 338.9 1071.0 339.1 1077.0 340.8 1083.0 343.5 1089.0 347.4 1093.0 351.0 1097.4 356.0 1101.2 362.0 1103.7 368.0 1105.1 374.0 1105.5 380.0 1104.7 386.0 1102.2 392.0 1099.1 396.0 1095.0 399.0 1091.0 400.6ZM1339.0 522.1 1331.0 521.4 1323.0 519.0 1313.1 514.0 1303.0 507.1 1292.1 498.0 1284.3 490.0 1278.1 482.0 1273.0 472.4 1270.3 464.0 1269.1 456.0 1269.6 446.0 1271.7 438.0 1275.6 430.0 1280.3 424.0 1287.0 418.5 1293.0 415.4 1299.0 413.3 1305.0 412.2 1311.0 411.8 1317.0 412.0 1329.0 414.1 1335.2 416.0 1343.0 419.1 1355.0 425.6 1365.0 433.5 1373.0 442.5 1376.5 448.0 1379.0 453.1 1380.9 458.0 1382.4 464.0 1383.2 470.0 1383.2 476.0 1381.5 486.0 1379.4 492.0 1377.0 496.8 1373.6 502.0 1369.0 507.4 1364.1 512.0 1359.0 515.7 1354.9 518.0 1349.0 520.4 1343.0 521.8 1339.0 522.1ZM1147.0 670.1 1143.0 670.8 1137.0 671.0 1127.0 669.6 1117.0 665.9 1107.0 660.0 1097.8 652.0 1091.3 644.0 1086.8 636.0 1083.4 626.0 1082.2 616.0 1082.8 606.0 1085.4 596.0 1090.0 586.0 1095.6 578.0 1099.2 574.0 1103.8 570.0 1109.0 566.5 1113.0 564.4 1121.0 561.7 1131.0 560.7 1141.0 562.0 1151.0 565.1 1163.0 570.6 1182.9 582.0 1193.0 589.2 1199.5 596.0 1201.9 600.0 1203.4 604.0 1204.2 610.0 1203.4 616.0 1201.0 622.0 1195.5 630.0 1174.7 652.0 1166.3 660.0 1157.0 666.4 1153.0 668.2 1147.0 670.1ZM961.0 844.4 955.0 844.9 951.0 844.4 947.0 843.3 943.0 841.2 939.0 838.0 937.0 835.7 934.4 832.0 931.5 826.0 928.1 814.0 926.9 806.0 926.4 798.0 927.1 784.0 929.9 770.0 933.5 760.0 939.0 750.4 945.0 743.3 953.0 737.0 961.0 733.2 971.0 730.8 977.0 730.3 983.0 730.5 993.0 732.3 1001.0 735.3 1005.0 737.5 1009.0 740.5 1015.0 747.2 1018.7 754.0 1021.1 762.0 1022.3 772.0 1021.7 784.0 1019.6 794.0 1016.6 802.0 1013.0 808.4 1007.1 816.0 1001.0 822.0 991.0 829.8 979.0 837.4 969.0 842.1 961.0 844.4ZM1515.0 1128.4 1511.0 1128.6 1507.0 1128.2 1497.0 1125.9 1487.0 1122.3 1477.0 1117.4 1469.0 1112.1 1463.0 1107.0 1456.6 1100.0 1451.2 1092.0 1447.0 1083.5 1443.9 1074.0 1442.5 1064.0 1442.6 1056.0 1444.2 1048.0 1447.0 1041.3 1451.0 1035.5 1457.0 1030.4 1461.0 1028.4 1465.0 1027.2 1473.0 1026.2 1483.0 1026.9 1495.0 1029.8 1503.0 1033.1 1511.0 1038.3 1517.1 1044.0 1523.1 1052.0 1528.0 1062.0 1531.0 1072.0 1532.3 1082.0 1532.1 1094.0 1531.0 1101.7 1529.5 1108.0 1527.0 1115.7 1525.0 1120.0 1521.0 1125.6 1519.0 1127.1 1515.0 1128.4ZM1557.0 1202.5 1553.0 1203.6 1549.0 1203.9 1543.0 1202.8 1539.0 1201.0 1535.0 1198.4 1531.0 1194.7 1527.3 1190.0 1525.0 1186.0 1523.0 1181.1 1521.6 1176.0 1520.8 1170.0 1520.9 1164.0 1521.9 1158.0 1524.0 1152.0 1526.8 1148.0 1529.0 1146.4 1533.0 1145.4 1539.0 1146.0 1545.0 1147.9 1551.0 1150.7 1557.0 1154.8 1561.0 1158.5 1563.9 1162.0 1567.0 1167.1 1568.9 1172.0 1570.0 1178.0 1569.9 1184.0 1569.1 1188.0 1567.6 1192.0 1565.0 1196.3 1561.0 1200.2 1557.0 1202.5Z" fill="#80ff80" fill-rule="evenodd"/>
<path d="M1343.0 510.4 1337.0 511.1 1329.4 510.0 1323.0 507.7 1316.3 504.0 1308.2 498.0 1301.0 491.4 1294.5 484.0 1289.0 476.0 1285.3 468.0 1283.6 462.0 1282.9 456.0 1283.3 450.0 1284.8 444.0 1288.0 438.0 1291.4 434.0 1297.0 429.7 1305.0 426.5 1313.0 425.4 1323.0 426.0 1333.0 428.4 1343.0 432.7 1353.0 439.2 1360.2 446.0 1365.8 454.0 1369.3 462.0 1370.8 470.0 1370.9 476.0 1370.4 480.0 1368.0 488.0 1363.6 496.0 1360.4 500.0 1357.0 503.3 1349.9 508.0 1343.0 510.4ZM1147.0 662.5 1139.0 663.7 1131.0 663.0 1123.0 660.6 1114.3 656.0 1106.6 650.0 1099.5 642.0 1094.6 634.0 1091.6 626.0 1090.1 618.0 1090.2 608.0 1091.9 600.0 1095.1 592.0 1100.2 584.0 1106.0 578.0 1113.0 573.1 1121.0 569.8 1129.0 568.5 1139.0 569.2 1148.8 572.0 1157.8 576.0 1171.5 584.0 1182.4 592.0 1186.6 596.0 1189.0 599.1 1190.8 602.0 1192.4 606.0 1192.9 612.0 1191.5 618.0 1188.4 624.0 1182.4 632.0 1170.4 646.0 1163.0 653.3 1155.0 659.1 1147.0 662.5ZM975.0 818.2 967.0 819.7 961.0 819.3 955.0 816.9 951.0 813.6 947.0 808.0 943.9 800.0 942.5 792.0 942.6 782.0 944.1 774.0 947.0 766.0 951.0 759.4 955.9 754.0 961.5 750.0 969.0 746.9 975.0 745.7 983.0 745.8 989.0 747.1 995.0 749.7 999.0 752.4 1003.0 756.6 1006.2 762.0 1008.2 768.0 1009.0 774.0 1008.7 780.0 1007.6 786.0 1005.5 792.0 1003.0 796.8 999.0 802.4 993.3 808.0 987.9 812.0 981.0 815.9 975.0 818.2ZM1501.0 1096.5 1497.0 1097.6 1493.0 1097.8 1487.0 1097.0 1483.0 1095.6 1479.0 1093.5 1475.0 1090.5 1471.0 1086.2 1469.0 1083.2 1466.6 1078.0 1465.5 1074.0 1465.1 1070.0 1465.4 1066.0 1466.4 1062.0 1468.4 1058.0 1471.0 1054.9 1475.0 1052.0 1479.0 1050.4 1483.0 1049.7 1489.0 1049.8 1493.0 1050.7 1499.0 1053.3 1502.8 1056.0 1506.7 1060.0 1509.0 1063.3 1511.3 1068.0 1512.4 1072.0 1512.9 1078.0 1512.5 1082.0 1511.3 1086.0 1509.0 1090.3 1505.4 1094.0 1501.0 1096.5Z" fill="#a6ff60" fill-rule="evenodd"/>
<path d="M1339.0 496.4 1335.0 496.8 1331.0 496.3 1327.0 495.0 1321.3 492.0 1317.0 488.8 1313.0 485.0 1309.0 480.3 1306.0 476.0 1303.0 470.1 1301.7 466.0 1300.9 462.0 1300.9 458.0 1301.7 454.0 1303.6 450.0 1305.2 448.0 1309.0 445.0 1313.0 443.3 1319.0 442.3 1325.0 442.6 1331.0 444.0 1337.0 446.5 1343.0 450.2 1347.4 454.0 1352.0 460.0 1354.0 464.0 1355.6 470.0 1355.8 476.0 1354.6 482.0 1351.5 488.0 1348.0 492.0 1343.0 495.2 1339.0 496.4ZM1147.0 654.3 1141.0 655.7 1133.0 655.5 1127.0 654.0 1119.0 650.1 1113.0 645.6 1107.0 639.3 1103.0 633.3 1099.7 626.0 1098.2 620.0 1097.6 612.0 1098.6 604.0 1101.0 597.0 1105.0 590.1 1109.0 585.5 1115.0 580.8 1121.0 577.9 1127.0 576.5 1135.0 576.3 1143.0 577.8 1151.0 580.8 1161.0 586.4 1171.0 594.0 1176.5 600.0 1179.8 606.0 1180.7 610.0 1180.2 616.0 1178.0 622.0 1173.3 630.0 1167.0 638.4 1160.0 646.0 1153.0 651.4 1147.0 654.3ZM979.0 788.5 975.0 789.5 971.0 788.6 968.4 786.0 967.0 782.0 967.5 778.0 969.5 774.0 973.0 771.1 977.0 770.0 981.0 770.8 983.0 772.1 985.0 775.0 985.6 778.0 985.0 781.9 983.9 784.0 982.4 786.0 979.0 788.5Z" fill="#ddff44" fill-rule="evenodd"/>
<path d="M1143.0 646.4 1139.0 647.1 1133.0 646.8 1127.0 645.0 1121.6 642.0 1117.0 638.3 1113.0 633.9 1109.3 628.0 1107.0 622.0 1105.8 616.0 1105.8 610.0 1106.9 604.0 1108.5 600.0 1111.0 595.6 1115.0 591.1 1119.1 588.0 1125.0 585.4 1131.0 584.4 1137.0 584.7 1143.0 586.1 1149.0 588.7 1155.0 592.4 1161.5 598.0 1165.0 602.4 1167.7 608.0 1168.5 612.0 1168.0 618.0 1165.9 624.0 1162.5 630.0 1158.1 636.0 1153.0 641.0 1148.7 644.0 1143.0 646.4Z" fill="#ffd42a" fill-rule="evenodd"/>
<path d="M1137.0 636.1 1133.0 635.8 1129.0 634.5 1123.0 630.4 1120.8 628.0 1118.2 624.0 1116.5 620.0 1115.7 616.0 1115.5 612.0 1116.1 608.0 1119.0 601.8 1121.0 599.4 1125.0 596.5 1131.0 594.6 1135.0 594.5 1139.0 595.3 1143.0 596.8 1147.0 599.2 1150.2 602.0 1153.0 605.6 1154.2 608.0 1155.5 612.0 1155.7 616.0 1155.0 620.0 1153.4 624.0 1151.0 628.0 1149.0 630.3 1145.0 633.6 1141.0 635.4 1137.0 636.1Z" fill="#ff0000" fill-rule="evenodd"/>
<ellipse cx="1336.6" cy="658.8" rx="14.6" ry="9.8" fill="#e6eefc"/>
</g>
<path d="M1124.5 381.7l7.8 7.8m0-7.8l-7.8 7.8M1093.9 406.6l7.8 7.8m0-7.8l-7.8 7.8M1121.3 408.7l7.8 7.8m0-7.8l-7.8 7.8M1114.6 412.6l7.8 7.8m0-7.8l-7.8 7.8M1111.6 422.5l7.8 7.8m0-7.8l-7.8 7.8M1115.1 531.3l7.8 7.8m0-7.8l-7.8 7.8M1113.9 563.4l7.8 7.8m0-7.8l-7.8 7.8M1049.8 601.2l7.8 7.8m0-7.8l-7.8 7.8M928.1 615.5l7.8 7.8m0-7.8l-7.8 7.8M1184.2 389.8l7.8 7.8m0-7.8l-7.8 7.8M1255.9 380.3l7.8 7.8m0-7.8l-7.8 7.8M1292.4 390.5l7.8 7.8m0-7.8l-7.8 7.8M1260.1 407.5l7.8 7.8m0-7.8l-7.8 7.8M1313.1 403.6l7.8 7.8m0-7.8l-7.8 7.8M1293.5 411.0l7.8 7.8m0-7.8l-7.8 7.8M1332.2 417.5l7.8 7.8m0-7.8l-7.8 7.8M1326.0 423.2l7.8 7.8m0-7.8l-7.8 7.8M1275.5 425.5l7.8 7.8m0-7.8l-7.8 7.8M1313.1 430.1l7.8 7.8m0-7.8l-7.8 7.8M1264.2 433.6l7.8 7.8m0-7.8l-7.8 7.8M1363.6 426.4l7.8 7.8m0-7.8l-7.8 7.8M1368.7 433.6l7.8 7.8m0-7.8l-7.8 7.8M1337.8 436.8l7.8 7.8m0-7.8l-7.8 7.8M1380.0 442.1l7.8 7.8m0-7.8l-7.8 7.8M1277.6 444.7l7.8 7.8m0-7.8l-7.8 7.8M1289.8 444.0l7.8 7.8m0-7.8l-7.8 7.8M1289.8 450.2l7.8 7.8m0-7.8l-7.8 7.8M1261.0 453.4l7.8 7.8m0-7.8l-7.8 7.8M1371.9 453.2l7.8 7.8m0-7.8l-7.8 7.8M1296.5 461.3l7.8 7.8m0-7.8l-7.8 7.8M1342.4 462.2l7.8 7.8m0-7.8l-7.8 7.8M1347.7 462.4l7.8 7.8m0-7.8l-7.8 7.8M1363.6 470.2l7.8 7.8m0-7.8l-7.8 7.8M1297.4 473.0l7.8 7.8m0-7.8l-7.8 7.8M1308.3 472.6l7.8 7.8m0-7.8l-7.8 7.8M1335.5 473.2l7.8 7.8m0-7.8l-7.8 7.8M1236.8 476.9l7.8 7.8m0-7.8l-7.8 7.8M1372.4 483.6l7.8 7.8m0-7.8l-7.8 7.8M1394.7 482.7l7.8 7.8m0-7.8l-7.8 7.8M1393.1 488.2l7.8 7.8m0-7.8l-7.8 7.8M1303.0 484.3l7.8 7.8m0-7.8l-7.8 7.8M1314.0 483.9l7.8 7.8m0-7.8l-7.8 7.8M1319.1 489.8l7.8 7.8m0-7.8l-7.8 7.8M1345.1 485.5l7.8 7.8m0-7.8l-7.8 7.8M1251.3 491.2l7.8 7.8m0-7.8l-7.8 7.8M1169.5 489.8l7.8 7.8m0-7.8l-7.8 7.8M1334.1 496.3l7.8 7.8m0-7.8l-7.8 7.8M1333.6 502.1l7.8 7.8m0-7.8l-7.8 7.8M1347.9 508.8l7.8 7.8m0-7.8l-7.8 7.8M1333.2 512.9l7.8 7.8m0-7.8l-7.8 7.8M1337.3 518.2l7.8 7.8m0-7.8l-7.8 7.8M1332.0 523.3l7.8 7.8m0-7.8l-7.8 7.8M1266.8 516.6l7.8 7.8m0-7.8l-7.8 7.8M1410.9 517.3l7.8 7.8m0-7.8l-7.8 7.8M1331.8 534.1l7.8 7.8m0-7.8l-7.8 7.8M1389.2 539.0l7.8 7.8m0-7.8l-7.8 7.8M1237.9 562.5l7.8 7.8m0-7.8l-7.8 7.8M1160.0 594.5l7.8 7.8m0-7.8l-7.8 7.8M1191.8 596.6l7.8 7.8m0-7.8l-7.8 7.8M1334.5 624.9l7.8 7.8m0-7.8l-7.8 7.8M1513.4 450.7l7.8 7.8m0-7.8l-7.8 7.8M1592.3 472.8l7.8 7.8m0-7.8l-7.8 7.8M1578.7 527.0l7.8 7.8m0-7.8l-7.8 7.8M1643.5 576.1l7.8 7.8m0-7.8l-7.8 7.8M1624.3 595.9l7.8 7.8m0-7.8l-7.8 7.8M1526.1 585.8l7.8 7.8m0-7.8l-7.8 7.8M1520.4 604.2l7.8 7.8m0-7.8l-7.8 7.8M1011.3 676.4l7.8 7.8m0-7.8l-7.8 7.8M1077.7 665.5l7.8 7.8m0-7.8l-7.8 7.8M1115.8 670.6l7.8 7.8m0-7.8l-7.8 7.8M1127.3 644.5l7.8 7.8m0-7.8l-7.8 7.8M1138.6 637.6l7.8 7.8m0-7.8l-7.8 7.8M998.6 696.4l7.8 7.8m0-7.8l-7.8 7.8M937.8 700.3l7.8 7.8m0-7.8l-7.8 7.8M957.6 704.9l7.8 7.8m0-7.8l-7.8 7.8M1042.2 713.7l7.8 7.8m0-7.8l-7.8 7.8M890.3 720.6l7.8 7.8m0-7.8l-7.8 7.8M954.8 717.6l7.8 7.8m0-7.8l-7.8 7.8M1005.1 721.1l7.8 7.8m0-7.8l-7.8 7.8M1009.0 732.8l7.8 7.8m0-7.8l-7.8 7.8M945.4 735.4l7.8 7.8m0-7.8l-7.8 7.8M937.8 740.9l7.8 7.8m0-7.8l-7.8 7.8M944.5 747.8l7.8 7.8m0-7.8l-7.8 7.8M950.7 749.0l7.8 7.8m0-7.8l-7.8 7.8M1019.8 740.2l7.8 7.8m0-7.8l-7.8 7.8M1025.6 740.7l7.8 7.8m0-7.8l-7.8 7.8M1012.2 755.2l7.8 7.8m0-7.8l-7.8 7.8M1017.8 760.5l7.8 7.8m0-7.8l-7.8 7.8M975.4 757.5l7.8 7.8m0-7.8l-7.8 7.8M982.3 758.2l7.8 7.8m0-7.8l-7.8 7.8M1011.3 765.8l7.8 7.8m0-7.8l-7.8 7.8M993.8 764.9l7.8 7.8m0-7.8l-7.8 7.8M987.1 770.0l7.8 7.8m0-7.8l-7.8 7.8M968.4 769.3l7.8 7.8m0-7.8l-7.8 7.8M935.7 767.9l7.8 7.8m0-7.8l-7.8 7.8M935.5 781.0l7.8 7.8m0-7.8l-7.8 7.8M955.5 781.3l7.8 7.8m0-7.8l-7.8 7.8M900.4 780.8l7.8 7.8m0-7.8l-7.8 7.8M980.9 787.0l7.8 7.8m0-7.8l-7.8 7.8M987.1 787.0l7.8 7.8m0-7.8l-7.8 7.8M974.7 793.0l7.8 7.8m0-7.8l-7.8 7.8M949.1 794.2l7.8 7.8m0-7.8l-7.8 7.8M942.6 800.9l7.8 7.8m0-7.8l-7.8 7.8M942.6 807.8l7.8 7.8m0-7.8l-7.8 7.8M1005.3 797.9l7.8 7.8m0-7.8l-7.8 7.8M1011.3 803.2l7.8 7.8m0-7.8l-7.8 7.8M1033.9 801.8l7.8 7.8m0-7.8l-7.8 7.8M1028.8 811.9l7.8 7.8m0-7.8l-7.8 7.8M1040.8 816.1l7.8 7.8m0-7.8l-7.8 7.8M969.4 811.7l7.8 7.8m0-7.8l-7.8 7.8M894.2 817.5l7.8 7.8m0-7.8l-7.8 7.8M895.8 832.2l7.8 7.8m0-7.8l-7.8 7.8M911.0 837.7l7.8 7.8m0-7.8l-7.8 7.8M926.0 842.6l7.8 7.8m0-7.8l-7.8 7.8M965.7 836.6l7.8 7.8m0-7.8l-7.8 7.8M973.0 841.9l7.8 7.8m0-7.8l-7.8 7.8M940.5 847.4l7.8 7.8m0-7.8l-7.8 7.8M948.4 852.7l7.8 7.8m0-7.8l-7.8 7.8M1015.7 839.8l7.8 7.8m0-7.8l-7.8 7.8M1017.1 845.4l7.8 7.8m0-7.8l-7.8 7.8M971.7 867.3l7.8 7.8m0-7.8l-7.8 7.8M974.7 879.0l7.8 7.8m0-7.8l-7.8 7.8M926.0 877.9l7.8 7.8m0-7.8l-7.8 7.8M927.6 885.2l7.8 7.8m0-7.8l-7.8 7.8M882.4 888.5l7.8 7.8m0-7.8l-7.8 7.8M876.9 898.1l7.8 7.8m0-7.8l-7.8 7.8M959.7 918.0l7.8 7.8m0-7.8l-7.8 7.8M987.8 934.1l7.8 7.8m0-7.8l-7.8 7.8M1334.8 675.2l7.8 7.8m0-7.8l-7.8 7.8M1331.5 683.0l7.8 7.8m0-7.8l-7.8 7.8M1415.5 702.9l7.8 7.8m0-7.8l-7.8 7.8M1414.8 709.1l7.8 7.8m0-7.8l-7.8 7.8M1467.6 751.1l7.8 7.8m0-7.8l-7.8 7.8M1438.8 805.0l7.8 7.8m0-7.8l-7.8 7.8M1464.1 811.9l7.8 7.8m0-7.8l-7.8 7.8M1349.5 830.8l7.8 7.8m0-7.8l-7.8 7.8M1167.4 852.3l7.8 7.8m0-7.8l-7.8 7.8M1248.5 866.8l7.8 7.8m0-7.8l-7.8 7.8M1420.5 873.5l7.8 7.8m0-7.8l-7.8 7.8M1469.2 929.5l7.8 7.8m0-7.8l-7.8 7.8M1202.7 943.6l7.8 7.8m0-7.8l-7.8 7.8M1219.5 947.0l7.8 7.8m0-7.8l-7.8 7.8M1587.9 643.2l7.8 7.8m0-7.8l-7.8 7.8M1519.4 664.8l7.8 7.8m0-7.8l-7.8 7.8M1572.9 678.2l7.8 7.8m0-7.8l-7.8 7.8M1632.6 690.9l7.8 7.8m0-7.8l-7.8 7.8M1567.2 710.2l7.8 7.8m0-7.8l-7.8 7.8M1633.1 759.4l7.8 7.8m0-7.8l-7.8 7.8M1583.3 782.2l7.8 7.8m0-7.8l-7.8 7.8M1639.3 804.3l7.8 7.8m0-7.8l-7.8 7.8M1540.4 810.1l7.8 7.8m0-7.8l-7.8 7.8M1565.6 812.8l7.8 7.8m0-7.8l-7.8 7.8M1746.1 818.1l7.8 7.8m0-7.8l-7.8 7.8M1778.1 804.8l7.8 7.8m0-7.8l-7.8 7.8M1647.4 840.0l7.8 7.8m0-7.8l-7.8 7.8M1653.6 841.0l7.8 7.8m0-7.8l-7.8 7.8M1562.1 857.1l7.8 7.8m0-7.8l-7.8 7.8M1510.7 898.8l7.8 7.8m0-7.8l-7.8 7.8M1521.5 910.1l7.8 7.8m0-7.8l-7.8 7.8M1574.8 913.4l7.8 7.8m0-7.8l-7.8 7.8M1597.8 918.7l7.8 7.8m0-7.8l-7.8 7.8M1064.3 957.6l7.8 7.8m0-7.8l-7.8 7.8M1093.6 968.2l7.8 7.8m0-7.8l-7.8 7.8M1122.2 975.1l7.8 7.8m0-7.8l-7.8 7.8M1103.5 979.8l7.8 7.8m0-7.8l-7.8 7.8M1064.3 977.7l7.8 7.8m0-7.8l-7.8 7.8M1029.3 981.8l7.8 7.8m0-7.8l-7.8 7.8M1106.5 990.6l7.8 7.8m0-7.8l-7.8 7.8M1151.3 1007.9l7.8 7.8m0-7.8l-7.8 7.8M1085.3 1028.2l7.8 7.8m0-7.8l-7.8 7.8M1110.5 1034.2l7.8 7.8m0-7.8l-7.8 7.8M974.4 1046.8l7.8 7.8m0-7.8l-7.8 7.8M1044.7 1051.7l7.8 7.8m0-7.8l-7.8 7.8M1077.3 1054.9l7.8 7.8m0-7.8l-7.8 7.8M1044.7 1070.8l7.8 7.8m0-7.8l-7.8 7.8M1131.2 1086.7l7.8 7.8m0-7.8l-7.8 7.8M1093.9 1162.4l7.8 7.8m0-7.8l-7.8 7.8M1349.5 963.4l7.8 7.8m0-7.8l-7.8 7.8M1432.8 960.2l7.8 7.8m0-7.8l-7.8 7.8M1444.7 957.4l7.8 7.8m0-7.8l-7.8 7.8M1460.4 951.9l7.8 7.8m0-7.8l-7.8 7.8M1463.9 948.9l7.8 7.8m0-7.8l-7.8 7.8M1450.5 971.9l7.8 7.8m0-7.8l-7.8 7.8M1436.7 980.9l7.8 7.8m0-7.8l-7.8 7.8M1429.8 985.1l7.8 7.8m0-7.8l-7.8 7.8M1453.0 982.5l7.8 7.8m0-7.8l-7.8 7.8M1435.1 993.8l7.8 7.8m0-7.8l-7.8 7.8M1450.5 1002.8l7.8 7.8m0-7.8l-7.8 7.8M1375.4 1012.5l7.8 7.8m0-7.8l-7.8 7.8M1398.2 1015.7l7.8 7.8m0-7.8l-7.8 7.8M1410.4 1011.3l7.8 7.8m0-7.8l-7.8 7.8M1414.5 1021.0l7.8 7.8m0-7.8l-7.8 7.8M1379.0 1027.3l7.8 7.8m0-7.8l-7.8 7.8M1451.9 1021.3l7.8 7.8m0-7.8l-7.8 7.8M1455.8 1019.4l7.8 7.8m0-7.8l-7.8 7.8M1461.6 1020.8l7.8 7.8m0-7.8l-7.8 7.8M1433.4 1030.2l7.8 7.8m0-7.8l-7.8 7.8M1467.6 1030.7l7.8 7.8m0-7.8l-7.8 7.8M1392.2 1040.2l7.8 7.8m0-7.8l-7.8 7.8M1454.2 1038.5l7.8 7.8m0-7.8l-7.8 7.8M1362.2 1058.4l7.8 7.8m0-7.8l-7.8 7.8M1408.3 1058.4l7.8 7.8m0-7.8l-7.8 7.8M1423.5 1058.4l7.8 7.8m0-7.8l-7.8 7.8M1426.5 1063.7l7.8 7.8m0-7.8l-7.8 7.8M1463.4 1066.0l7.8 7.8m0-7.8l-7.8 7.8M1473.1 1060.7l7.8 7.8m0-7.8l-7.8 7.8M1432.8 1079.8l7.8 7.8m0-7.8l-7.8 7.8M1461.1 1087.7l7.8 7.8m0-7.8l-7.8 7.8M1473.8 1087.7l7.8 7.8m0-7.8l-7.8 7.8M1458.1 1096.0l7.8 7.8m0-7.8l-7.8 7.8M1442.0 1102.4l7.8 7.8m0-7.8l-7.8 7.8M1438.5 1110.7l7.8 7.8m0-7.8l-7.8 7.8M1454.2 1154.7l7.8 7.8m0-7.8l-7.8 7.8M1461.1 1151.3l7.8 7.8m0-7.8l-7.8 7.8M1457.0 1161.0l7.8 7.8m0-7.8l-7.8 7.8M1222.5 1022.6l7.8 7.8m0-7.8l-7.8 7.8M1231.3 1072.2l7.8 7.8m0-7.8l-7.8 7.8M1273.9 1070.1l7.8 7.8m0-7.8l-7.8 7.8M1335.0 1089.7l7.8 7.8m0-7.8l-7.8 7.8M1341.0 1095.3l7.8 7.8m0-7.8l-7.8 7.8M1233.8 1129.4l7.8 7.8m0-7.8l-7.8 7.8M1294.7 1138.4l7.8 7.8m0-7.8l-7.8 7.8M1250.4 1225.8l7.8 7.8m0-7.8l-7.8 7.8M1511.4 950.2l7.8 7.8m0-7.8l-7.8 7.8M1522.4 954.2l7.8 7.8m0-7.8l-7.8 7.8M1488.8 959.7l7.8 7.8m0-7.8l-7.8 7.8M1513.9 971.5l7.8 7.8m0-7.8l-7.8 7.8M1514.4 979.5l7.8 7.8m0-7.8l-7.8 7.8M1519.0 990.6l7.8 7.8m0-7.8l-7.8 7.8M1514.6 1001.4l7.8 7.8m0-7.8l-7.8 7.8M1523.4 1002.1l7.8 7.8m0-7.8l-7.8 7.8M1488.1 1016.4l7.8 7.8m0-7.8l-7.8 7.8M1490.6 1028.6l7.8 7.8m0-7.8l-7.8 7.8M1526.6 1030.2l7.8 7.8m0-7.8l-7.8 7.8M1543.2 1023.3l7.8 7.8m0-7.8l-7.8 7.8M1488.5 1044.3l7.8 7.8m0-7.8l-7.8 7.8M1490.4 1057.5l7.8 7.8m0-7.8l-7.8 7.8M1524.5 1055.4l7.8 7.8m0-7.8l-7.8 7.8M1560.0 1059.5l7.8 7.8m0-7.8l-7.8 7.8M1496.8 1067.6l7.8 7.8m0-7.8l-7.8 7.8M1505.6 1069.4l7.8 7.8m0-7.8l-7.8 7.8M1510.2 1066.0l7.8 7.8m0-7.8l-7.8 7.8M1512.3 1079.8l7.8 7.8m0-7.8l-7.8 7.8M1507.2 1083.7l7.8 7.8m0-7.8l-7.8 7.8M1499.8 1095.5l7.8 7.8m0-7.8l-7.8 7.8M1503.3 1101.0l7.8 7.8m0-7.8l-7.8 7.8M1526.6 1102.2l7.8 7.8m0-7.8l-7.8 7.8M1530.7 1107.5l7.8 7.8m0-7.8l-7.8 7.8M1581.2 1105.4l7.8 7.8m0-7.8l-7.8 7.8M1542.0 1125.2l7.8 7.8m0-7.8l-7.8 7.8M1617.4 1124.3l7.8 7.8m0-7.8l-7.8 7.8M1646.2 1108.6l7.8 7.8m0-7.8l-7.8 7.8M1581.9 1143.2l7.8 7.8m0-7.8l-7.8 7.8M1580.3 1154.3l7.8 7.8m0-7.8l-7.8 7.8M1531.4 1149.4l7.8 7.8m0-7.8l-7.8 7.8M1535.4 1155.4l7.8 7.8m0-7.8l-7.8 7.8M1553.8 1171.8l7.8 7.8m0-7.8l-7.8 7.8M1489.0 1163.0l7.8 7.8m0-7.8l-7.8 7.8M1505.1 1180.3l7.8 7.8m0-7.8l-7.8 7.8M1508.6 1187.5l7.8 7.8m0-7.8l-7.8 7.8M1519.2 1190.9l7.8 7.8m0-7.8l-7.8 7.8M1682.2 1026.6l7.8 7.8m0-7.8l-7.8 7.8" fill="none" stroke="#f8323a" stroke-width="1.12" stroke-opacity=".93"/>
<path d="M1059.9 928.7h8.4l-4.2 8.2zM1484.6 714.3h8.4l-4.2 8.2zM1596.8 716.1h8.4l-4.2 8.2zM1530.4 732.5h8.4l-4.2 8.2zM1528.8 748.4h8.4l-4.2 8.2zM1479.7 786.9h8.4l-4.2 8.2zM1479.7 793.6h8.4l-4.2 8.2zM1022.1 993.7h8.4l-4.2 8.2zM1044.4 1049.7h8.4l-4.2 8.2z" fill="#fff" fill-opacity=".7" stroke="#86cfa6" stroke-width="1"/>
<path d="M1125.6 578.8l4.2 4.2l-4.2 4.2l-4.2-4.2zM1151.0 578.5l4.2 4.2l-4.2 4.2l-4.2-4.2zM1119.2 593.1l4.2 4.2l-4.2 4.2l-4.2-4.2zM1105.1 600.2l4.2 4.2l-4.2 4.2l-4.2-4.2zM1119.7 600.2l4.2 4.2l-4.2 4.2l-4.2-4.2zM1149.6 621.7l4.2 4.2l-4.2 4.2l-4.2-4.2zM1192.3 604.8l4.2 4.2l-4.2 4.2l-4.2-4.2zM1207.3 606.4l4.2 4.2l-4.2 4.2l-4.2-4.2zM1081.4 632.0l4.2 4.2l-4.2 4.2l-4.2-4.2zM1134.9 630.9l4.2 4.2l-4.2 4.2l-4.2-4.2zM1143.4 653.0l4.2 4.2l-4.2 4.2l-4.2-4.2zM1158.2 665.0l4.2 4.2l-4.2 4.2l-4.2-4.2zM1222.9 652.5l4.2 4.2l-4.2 4.2l-4.2-4.2z" fill="#f6f6fc" stroke="#77778c" stroke-width="1"/>
<path d="M1306.4 788.2h28M1320.4 774.2v28" stroke="#4f4f4f" stroke-width="1.1" fill="none"/>
<circle cx="1320.4" cy="788.2" r="463.3" fill="none" stroke="#000" stroke-width="2.9"/>
<path d="M1320.4 324.9L1320.4 311.7M1400.9 331.9L1403.1 318.9M1478.9 352.8L1483.4 340.4M1552.1 387.0L1558.7 375.5M1618.2 433.3L1626.7 423.2M1675.3 490.4L1685.4 481.9M1721.6 556.5L1733.1 550.0M1755.8 629.7L1768.2 625.2M1776.7 707.7L1789.7 705.5M1783.7 788.2L1796.9 788.2M1776.7 868.7L1789.7 870.9M1755.8 946.7L1768.2 951.2M1721.6 1019.8L1733.1 1026.4M1675.3 1086.0L1685.4 1094.5M1618.2 1143.1L1626.7 1153.2M1552.1 1189.4L1558.7 1200.9M1478.9 1223.6L1483.4 1236.0M1400.9 1244.5L1403.1 1257.5M1320.4 1251.5L1320.4 1264.7M1239.9 1244.5L1237.7 1257.5M1161.9 1223.6L1157.4 1236.0M1088.8 1189.4L1082.2 1200.9M1022.6 1143.1L1014.1 1153.2M965.5 1086.0L955.4 1094.5M919.2 1019.9L907.7 1026.5M885.0 946.7L872.6 951.2M864.1 868.7L851.1 870.9M857.1 788.2L843.9 788.2M864.1 707.7L851.1 705.5M885.0 629.7L872.6 625.2M919.2 556.5L907.7 550.0M965.5 490.4L955.4 481.9M1022.6 433.3L1014.1 423.2M1088.8 387.0L1082.1 375.5M1161.9 352.8L1157.4 340.4M1239.9 331.9L1237.7 318.9" stroke="#000" stroke-width="3" fill="none"/>
<text x="1320.4" y="306.9" text-anchor="middle" style="font-family:'Liberation Sans',sans-serif;font-size:29.6px;fill:#000">N</text>
<text x="1320.4" y="1289.4" text-anchor="middle" style="font-family:'Liberation Sans',sans-serif;font-size:29.6px;fill:#000">S</text>
<text x="829" y="798.6" text-anchor="middle" style="font-family:'Liberation Sans',sans-serif;font-size:29.6px;fill:#000">W</text>
<text x="1811" y="798.6" text-anchor="middle" style="font-family:'Liberation Sans',sans-serif;font-size:29.6px;fill:#000">E</text>
</svg>
<div class="lgh" style="left:2073px;top:281px;width:479px;height:34px"></div>
<div class="lt b" style="left:2080px;top:288px">Properties</div>
<div class="lg" style="left:2073px;top:314px;width:479px;height:148px"></div>
<div class="lt b" style="left:2079px;top:321px">Plot Mode</div><div class="lt" style="left:2317px;top:321px">Pole Vector</div>
<div class="a" style="left:2075px;top:344px;width:476px;height:1px;background:#7a7a7a"></div>
<div class="lt b" style="left:2079px;top:350px">Vector Count (Weighted)</div><div class="lt" style="left:2317px;top:350px">427 (303 Entries)</div>
<div class="a" style="left:2075px;top:373px;width:476px;height:1px;background:#7a7a7a"></div>
<div class="lt b" style="left:2079px;top:379px">Terzaghi Weighting</div><div class="lt" style="left:2317px;top:379px">Minimum Bias Angle 15.0°</div>
<div class="a" style="left:2075px;top:402px;width:476px;height:1px;background:#7a7a7a"></div>
<div class="lt b" style="left:2079px;top:408px">Hemisphere</div><div class="lt" style="left:2317px;top:408px">Lower Hemisphere</div>
<div class="a" style="left:2075px;top:431px;width:476px;height:1px;background:#7a7a7a"></div>
<div class="lt b" style="left:2079px;top:437px">Projection</div><div class="lt" style="left:2317px;top:437px">Equal Angle</div>
<div class="a" style="left:2313px;top:316px;width:1px;height:144px;background:#7a7a7a"></div>
<div class="lgh" style="left:2073px;top:468px;width:479px;height:34px"></div>
<div class="lt b" style="left:2080px;top:475px">Symbols</div>
<div class="lg" style="left:2073px;top:501px;width:479px;height:120px"></div>
<div class="a" style="left:2075px;top:531px;width:476px;height:2px;background:#696969"></div>
<div class="a" style="left:2075px;top:561px;width:476px;height:1px;background:#7a7a7a"></div>
<div class="a" style="left:2075px;top:590px;width:476px;height:1px;background:#7a7a7a"></div>
<div class="a" style="left:2149px;top:503px;width:1px;height:116px;background:#7a7a7a"></div>
<div class="a" style="left:2349px;top:503px;width:1px;height:116px;background:#7a7a7a"></div>
<div class="lt b c" style="left:2111px;top:508px">Symbol</div><div class="lt b c" style="left:2249px;top:508px">TYPE</div><div class="lt b c" style="left:2449px;top:508px">Quantity</div>
<div class="lt c" style="left:2249px;top:538px">bedding</div><div class="lt c" style="left:2449px;top:538px">53</div>
<div class="lt c" style="left:2249px;top:567px">joint</div><div class="lt c" style="left:2449px;top:567px">364</div>
<div class="lt c" style="left:2249px;top:596px">shear</div><div class="lt c" style="left:2449px;top:596px">9</div>
<svg class="a" style="left:2101px;top:537px" width="22" height="80" viewBox="0 0 22 80">
<path d="M11 1.500L19.5 10L11 18.500L2.5 10Z" fill="#fff" stroke="#9a9aa4" stroke-width="1.1"/>
<path d="M3 30.500L19 46.500M19 30.500L3 46.5" stroke="#ee2e36" stroke-width="1.2"/>
<path d="M2.5 60H19.500L11 76Z" fill="#fff" stroke="#8fd3ae" stroke-width="1.1"/></svg>
<div class="lgh" style="left:2073px;top:628px;width:479px;height:34px"></div>
<div class="lt b" style="left:2080px;top:635px">Contours</div>
<div class="lg" style="left:2073px;top:661px;width:479px;height:412px"></div>
<div class="a" style="left:2075px;top:691px;width:476px;height:2px;background:#696969"></div>
<div class="a" style="left:2324px;top:663px;width:1px;height:408px;background:#7a7a7a"></div>
<div class="lt b c" style="left:2199px;top:668px">Color</div><div class="lt b c" style="left:2437px;top:668px">Density Concentration</div>
<div class="a" style="left:2080px;top:693px;width:238px;height:29px;background:#ffffff"></div>
<div class="lt c" style="left:2437px;top:698px">0.00 - 0.95</div>
<div class="a" style="left:2080px;top:722px;width:238px;height:29px;background:#e6eefc"></div>
<div class="lt c" style="left:2437px;top:727px">0.95 - 1.91</div>
<div class="a" style="left:2080px;top:751px;width:238px;height:29px;background:#ccf2ff"></div>
<div class="lt c" style="left:2437px;top:756px">1.91 - 2.86</div>
<div class="a" style="left:2080px;top:780px;width:238px;height:29px;background:#b3ffee"></div>
<div class="lt c" style="left:2437px;top:785px">2.86 - 3.82</div>
<div class="a" style="left:2080px;top:809px;width:238px;height:29px;background:#99ffc0"></div>
<div class="lt c" style="left:2437px;top:814px">3.82 - 4.77</div>
<div class="a" style="left:2080px;top:838px;width:238px;height:29px;background:#80ff80"></div>
<div class="lt c" style="left:2437px;top:843px">4.77 - 5.72</div>
<div class="a" style="left:2080px;top:867px;width:238px;height:29px;background:#a6ff60"></div>
<div class="lt c" style="left:2437px;top:872px">5.72 - 6.68</div>
<div class="a" style="left:2080px;top:896px;width:238px;height:29px;background:#ddff44"></div>
<div class="lt c" style="left:2437px;top:901px">6.68 - 7.63</div>
<div class="a" style="left:2080px;top:925px;width:238px;height:29px;background:#ffd42a"></div>
<div class="lt c" style="left:2437px;top:930px">7.63 - 8.59</div>
<div class="a" style="left:2075px;top:954px;width:476px;height:2px;background:#696969"></div>
<div class="lt b" style="left:2079px;top:961px">Contour Data</div><div class="lt" style="left:2329px;top:961px">Pole vector density</div>
<div class="a" style="left:2075px;top:984px;width:476px;height:1px;background:#7a7a7a"></div>
<div class="lt b" style="left:2079px;top:990px">Maximum Density</div><div class="lt" style="left:2329px;top:990px">9.54%</div>
<div class="a" style="left:2075px;top:1013px;width:476px;height:1px;background:#7a7a7a"></div>
<div class="lt b" style="left:2079px;top:1019px">Contour Distribution</div><div class="lt" style="left:2329px;top:1019px">Fisher</div>
<div class="a" style="left:2075px;top:1042px;width:476px;height:1px;background:#7a7a7a"></div>
<div class="lt b" style="left:2079px;top:1048px">Counting Circle Size</div><div class="lt" style="left:2329px;top:1048px">1.0%</div>
<div class="a" style="left:0;top:1337px;width:2560px;height:44px;background:#efefef;border-bottom:1px solid #b8b8b8"></div>
<div class="a" style="left:0;top:1381px;width:2560px;height:7px;background:linear-gradient(90deg,#e3e1ef 0%,#e2def0 22%,#ecdcee 26%,#f1dfe6 40%,#f3e2de 60%,#ece2e6 75%,#e4e3f0 90%,#e6e0ea 100%)"></div>
<div class="t" style="left:12px;top:1350px">Scripting:</div><div class="t" style="left:82px;top:1350px">Disconnected</div><div class="t" style="left:190px;top:1350px">Connect</div>
<svg class="a" style="left:270.0px;top:1356.0px" width="12" height="7" viewBox="-1 -1 12 7"><path d="M0 0L5.0 5L10 0" fill="none" stroke="#444" stroke-width="1.2" stroke-linecap="round" stroke-linejoin="round"/></svg>
<div class="a" style="left:302px;top:1341px;width:1px;height:36px;background:#4a4a4a"></div>
<div class="a" style="left:2010px;top:1341px;width:1px;height:36px;background:#4a4a4a"></div>
<div class="a" style="left:2196px;top:1341px;width:1px;height:36px;background:#4a4a4a"></div>
<div class="a" style="left:2474px;top:1341px;width:1px;height:36px;background:#4a4a4a"></div>
<div class="t b" style="left:310px;top:1350px;color:#111">Idle</div>
<div class="t" style="left:2018px;top:1350px">Units:</div><div class="t" style="left:2092px;top:1350px">Metric</div>
<svg class="a" style="left:2164.0px;top:1356.0px" width="12" height="7" viewBox="-1 -1 12 7"><path d="M0 0L5.0 5L10 0" fill="none" stroke="#555" stroke-width="1.2" stroke-linecap="round" stroke-linejoin="round"/></svg>
<div class="t" style="left:2204px;top:1350px">Orientation:</div><div class="t" style="left:2317px;top:1350px">Trend / Plunge</div>
<svg class="a" style="left:2441.0px;top:1356.0px" width="12" height="7" viewBox="-1 -1 12 7"><path d="M0 0L5.0 5L10 0" fill="none" stroke="#555" stroke-width="1.2" stroke-linecap="round" stroke-linejoin="round"/></svg>
</body></html>
